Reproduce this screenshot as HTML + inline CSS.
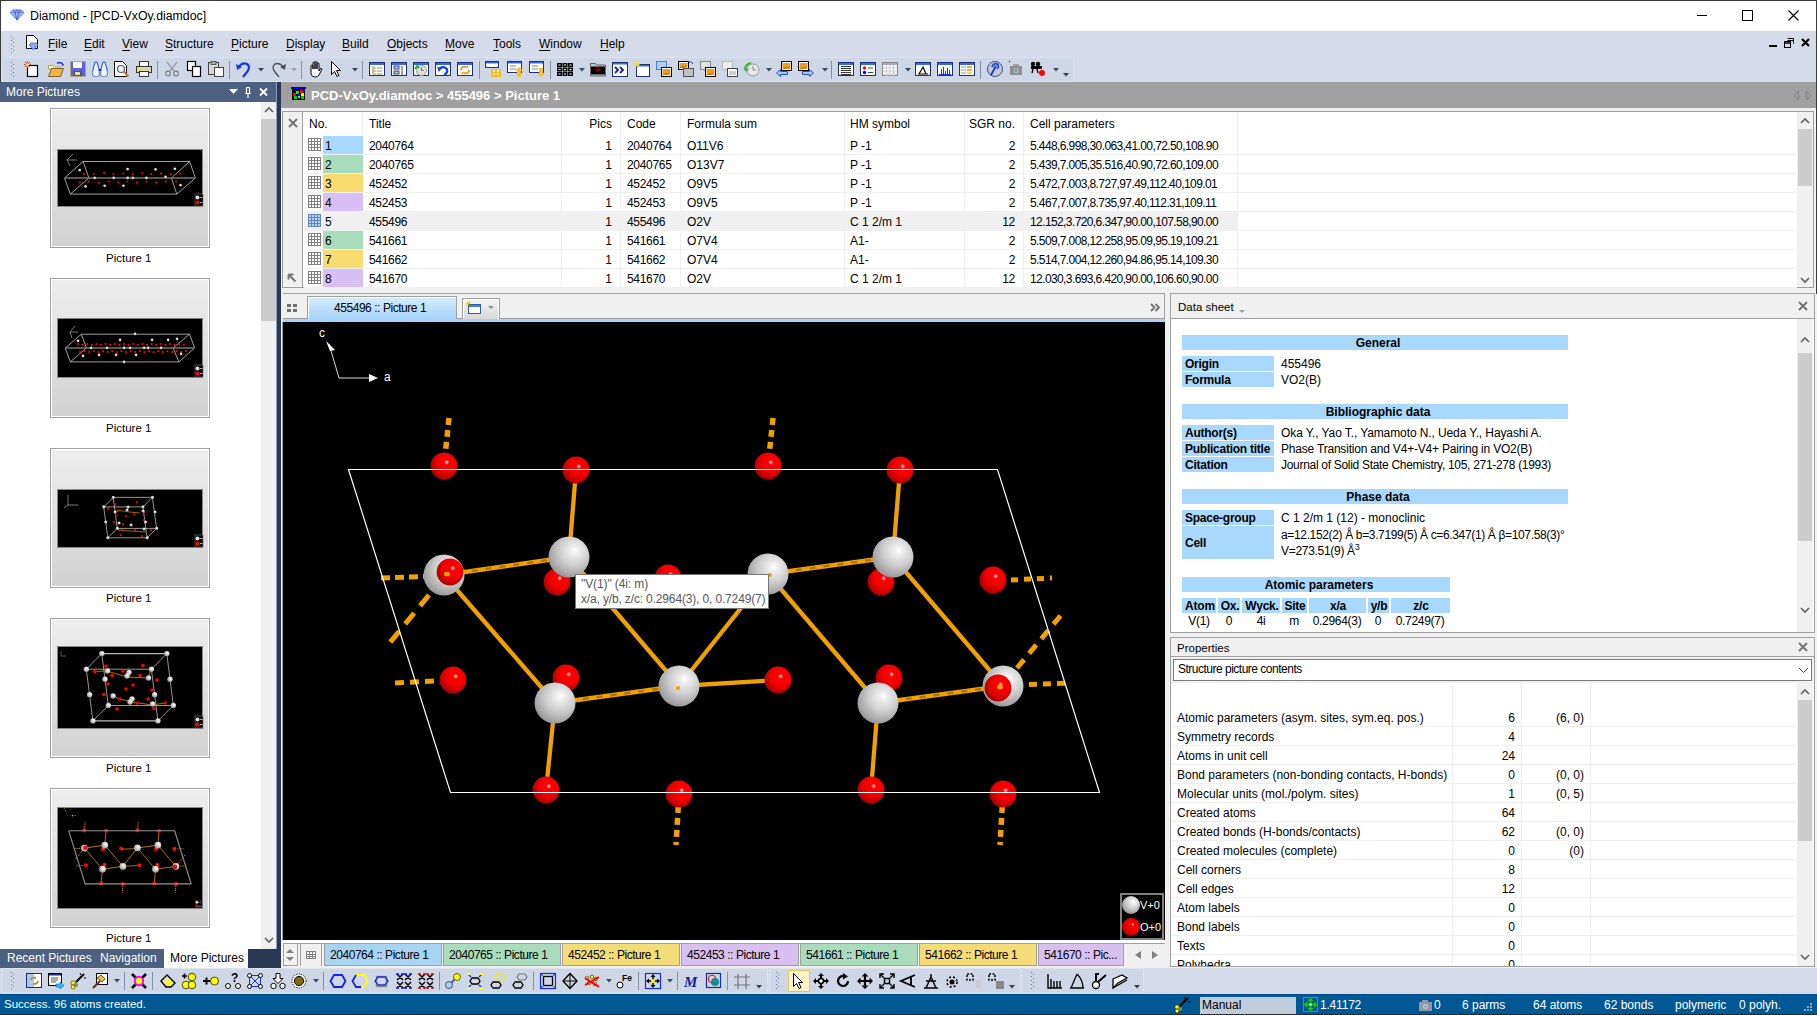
<!DOCTYPE html><html><head><meta charset="utf-8"><style>
*{margin:0;padding:0;box-sizing:border-box}
html,body{width:1817px;height:1015px;overflow:hidden;background:#fff}
body{position:relative;font:12px "Liberation Sans",sans-serif;color:#000}
.a{position:absolute}
.t{position:absolute;white-space:pre;line-height:14px;font-size:12px}
svg{position:absolute;overflow:visible}
</style></head><body><div class="a" style="left:0px;top:0px;width:1817px;height:1015px;background:#fff"></div>
<div class="a" style="left:0px;top:31px;width:1817px;height:51px;background:#d6dbe9"></div>
<svg style="left:9px;top:9px" width="16" height="12" viewBox="0 0 16 14" preserveAspectRatio="none">
<polygon points="1,4 4,1 12,1 15,4 8,13" fill="#9db4f5" stroke="#5a78e0" stroke-width="0.8"/>
<polyline points="1,4 15,4 M4,1" fill="none" stroke="#5a78e0" stroke-width="0.8"/>
<polyline points="4,1 6,4 8,13 10,4 12,1" fill="none" stroke="#3050d0" stroke-width="0.8"/>
<polyline points="6,4 8,1 10,4" fill="none" stroke="#3050d0" stroke-width="0.8"/>
</svg>
<div class="t" style="left:30px;top:9px;font-size:12.3px;color:#000">Diamond - [PCD-VxOy.diamdoc]</div>
<div class="a" style="left:1697px;top:15px;width:10px;height:1px;background:#000"></div>
<div class="a" style="left:1742px;top:10px;width:11px;height:11px;border:1px solid #000"></div>
<svg style="left:1788px;top:10px" width="11" height="11"><path d="M0.5 0.5L10.5 10.5M10.5 0.5L0.5 10.5" stroke="#000" stroke-width="1.1"/></svg>
<div class="a" style="left:0px;top:0px;width:1817px;height:1px;background:#3a3a3a"></div>
<div class="a" style="left:0px;top:0px;width:1px;height:1015px;background:#3a3a3a"></div>
<div class="a" style="left:1816px;top:0px;width:1px;height:1015px;background:#3a3a3a"></div>
<div class="a" style="left:0px;top:1014px;width:1817px;height:1px;background:#3a3a3a"></div>
<div class="a" style="left:11px;top:36px;width:1px;height:1px;background:#6f7b92"></div><div class="a" style="left:13px;top:38px;width:1px;height:1px;background:#6f7b92"></div><div class="a" style="left:11px;top:40px;width:1px;height:1px;background:#6f7b92"></div><div class="a" style="left:13px;top:42px;width:1px;height:1px;background:#6f7b92"></div><div class="a" style="left:11px;top:44px;width:1px;height:1px;background:#6f7b92"></div><div class="a" style="left:13px;top:46px;width:1px;height:1px;background:#6f7b92"></div><div class="a" style="left:11px;top:48px;width:1px;height:1px;background:#6f7b92"></div><div class="a" style="left:13px;top:50px;width:1px;height:1px;background:#6f7b92"></div><div class="a" style="left:11px;top:52px;width:1px;height:1px;background:#6f7b92"></div>
<svg style="left:25px;top:35px" width="14" height="16" viewBox="0 0 14 16">
<path d="M1.5 0.5H8.5L12.5 4.5V13.5H1.5Z" fill="#fff" stroke="#000"/>
<path d="M4 10l2-2h5l2 2-4.5 5z" fill="#8fa8f0" stroke="#4060d0" stroke-width="0.8"/>
</svg>
<div class="t" style="left:48px;top:37px;color:#000"><u style="text-decoration-thickness:1px;text-underline-offset:1.5px">F</u>ile</div>
<div class="t" style="left:84px;top:37px;color:#000"><u style="text-decoration-thickness:1px;text-underline-offset:1.5px">E</u>dit</div>
<div class="t" style="left:122px;top:37px;color:#000"><u style="text-decoration-thickness:1px;text-underline-offset:1.5px">V</u>iew</div>
<div class="t" style="left:165px;top:37px;color:#000"><u style="text-decoration-thickness:1px;text-underline-offset:1.5px">S</u>tructure</div>
<div class="t" style="left:231px;top:37px;color:#000"><u style="text-decoration-thickness:1px;text-underline-offset:1.5px">P</u>icture</div>
<div class="t" style="left:286px;top:37px;color:#000"><u style="text-decoration-thickness:1px;text-underline-offset:1.5px">D</u>isplay</div>
<div class="t" style="left:342px;top:37px;color:#000"><u style="text-decoration-thickness:1px;text-underline-offset:1.5px">B</u>uild</div>
<div class="t" style="left:387px;top:37px;color:#000"><u style="text-decoration-thickness:1px;text-underline-offset:1.5px">O</u>bjects</div>
<div class="t" style="left:445px;top:37px;color:#000"><u style="text-decoration-thickness:1px;text-underline-offset:1.5px">M</u>ove</div>
<div class="t" style="left:493px;top:37px;color:#000"><u style="text-decoration-thickness:1px;text-underline-offset:1.5px">T</u>ools</div>
<div class="t" style="left:539px;top:37px;color:#000"><u style="text-decoration-thickness:1px;text-underline-offset:1.5px">W</u>indow</div>
<div class="t" style="left:600px;top:37px;color:#000"><u style="text-decoration-thickness:1px;text-underline-offset:1.5px">H</u>elp</div>
<div class="a" style="left:1769px;top:45px;width:8px;height:2px;background:#000"></div>
<svg style="left:1784px;top:38px" width="10" height="10" viewBox="0 0 10 10"><path d="M3.5 0.5h6v5M3.5 2.5h6" fill="none" stroke="#000"/><rect x="0.5" y="3.5" width="6" height="6" fill="none" stroke="#000"/><path d="M0.5 5h6" stroke="#000" stroke-width="1.5"/></svg>
<svg style="left:1801px;top:38px" width="9" height="9"><path d="M1 1L8 8M8 1L1 8" stroke="#000" stroke-width="2.2"/></svg>
<div class="a" style="left:2px;top:57px;width:1072px;height:25px;background:#cfd6e5;border:1px solid #dde2ec;border-left-color:#d6dbe9"></div>
<div class="a" style="left:11px;top:62px;width:1px;height:1px;background:#6f7b92"></div><div class="a" style="left:13px;top:64px;width:1px;height:1px;background:#6f7b92"></div><div class="a" style="left:11px;top:66px;width:1px;height:1px;background:#6f7b92"></div><div class="a" style="left:13px;top:68px;width:1px;height:1px;background:#6f7b92"></div><div class="a" style="left:11px;top:70px;width:1px;height:1px;background:#6f7b92"></div><div class="a" style="left:13px;top:72px;width:1px;height:1px;background:#6f7b92"></div><div class="a" style="left:11px;top:74px;width:1px;height:1px;background:#6f7b92"></div><div class="a" style="left:13px;top:76px;width:1px;height:1px;background:#6f7b92"></div>
<div class="a" style="left:0px;top:82px;width:277px;height:20px;background:#4d6082"></div>
<div class="t" style="left:6px;top:85px;color:#fff;font-size:12px">More Pictures</div>
<svg style="left:228px;top:87px" width="40" height="11">
<path d="M1 2h9l-4.5 5z" fill="#fff"/>
<path d="M18.5 0.5v6M21.5 0.5v6M17 6.5h6M20 7v4M18 0.5h4" stroke="#fff" stroke-width="1.2" fill="none"/>
<path d="M32 1.5l7 7M39 1.5l-7 7" stroke="#fff" stroke-width="1.8"/>
</svg>
<div class="a" style="left:0px;top:102px;width:277px;height:847px;background:#fff"></div>
<div class="a" style="left:276px;top:82px;width:1px;height:886px;background:#8e9bbc"></div>
<div class="a" style="left:277px;top:82px;width:4px;height:886px;background:#293955"></div>
<div class="a" style="left:261px;top:102px;width:15px;height:847px;background:#f0f0f0"></div>
<div class="a" style="left:261px;top:119px;width:15px;height:202px;background:#cdcdcd"></div>
<svg style="left:264px;top:106px" width="10" height="8"><path d="M1 6l4-4 4 4" fill="none" stroke="#606060" stroke-width="1.6"/></svg>
<svg style="left:264px;top:936px" width="10" height="8"><path d="M1 2l4 4 4-4" fill="none" stroke="#606060" stroke-width="1.6"/></svg>
<div class="a" style="left:50px;top:108px;width:160px;height:140px;border:1px solid #a0a0a0;background:linear-gradient(#eeeeee,#d2d2d2);box-shadow:inset 1px 1px 0 #fff,inset -1px -1px 0 #fff"></div>
<div class="a" style="left:57px;top:149px;width:146px;height:58px;background:#000;border:1px solid #888"></div>
<svg style="left:58px;top:150px" width="144" height="56" viewBox="58 150 144 56"><path d="M64.5 178.0 L83.1 161.5 L189.6 161.5 L195.4 178.0 L176.8 194.1 L70.3 194.1 L64.5 178.0" fill="none" stroke="#c8c8c8" stroke-width="0.8"/><path d="M83.1 161.5 L88.9 178.0 L70.3 194.1" fill="none" stroke="#c8c8c8" stroke-width="0.8"/><path d="M189.6 161.5 L171.4 178.0 L176.8 194.1" fill="none" stroke="#c8c8c8" stroke-width="0.8"/><path d="M64.5 178.0 L195.4 178.0" fill="none" stroke="#777" stroke-width="1.3"/><circle cx="83.9" cy="174.0" r="1.1" fill="#f00"/><circle cx="93.6" cy="173.8" r="1.1" fill="#f00"/><circle cx="104.0" cy="173.0" r="1.1" fill="#f00"/><circle cx="113.5" cy="174.0" r="1.1" fill="#f00"/><circle cx="123.0" cy="173.5" r="1.1" fill="#f00"/><circle cx="132.6" cy="174.0" r="1.1" fill="#f00"/><circle cx="142.2" cy="173.3" r="1.1" fill="#f00"/><circle cx="151.3" cy="174.0" r="1.1" fill="#f00"/><circle cx="161.0" cy="173.5" r="1.1" fill="#f00"/><circle cx="171.0" cy="174.0" r="1.1" fill="#f00"/><circle cx="180.0" cy="173.5" r="1.1" fill="#f00"/><circle cx="79.7" cy="182.5" r="1.1" fill="#f00"/><circle cx="88.8" cy="181.5" r="1.1" fill="#f00"/><circle cx="99.0" cy="182.5" r="1.1" fill="#f00"/><circle cx="108.5" cy="181.5" r="1.1" fill="#f00"/><circle cx="118.0" cy="182.5" r="1.1" fill="#f00"/><circle cx="127.5" cy="181.5" r="1.1" fill="#f00"/><circle cx="137.0" cy="182.5" r="1.1" fill="#f00"/><circle cx="146.5" cy="181.5" r="1.1" fill="#f00"/><circle cx="156.0" cy="182.5" r="1.1" fill="#f00"/><circle cx="166.0" cy="181.5" r="1.1" fill="#f00"/><circle cx="176.0" cy="181.5" r="1.1" fill="#f00"/><circle cx="79.6" cy="170.2" r="1.4" fill="url(#gV)"/><circle cx="85.5" cy="186.5" r="1.4" fill="url(#gV)"/><circle cx="94.6" cy="178.0" r="1.4" fill="url(#gV)"/><circle cx="104.6" cy="185.8" r="1.4" fill="url(#gV)"/><circle cx="113.6" cy="178.0" r="1.4" fill="url(#gV)"/><circle cx="123.4" cy="185.8" r="1.4" fill="url(#gV)"/><circle cx="127.5" cy="169.2" r="1.4" fill="url(#gV)"/><circle cx="127.6" cy="178.0" r="1.4" fill="url(#gV)"/><circle cx="132.7" cy="178.0" r="1.4" fill="url(#gV)"/><circle cx="146.3" cy="178.0" r="1.4" fill="url(#gV)"/><circle cx="155.5" cy="169.5" r="1.4" fill="url(#gV)"/><circle cx="165.5" cy="177.0" r="1.4" fill="url(#gV)"/><circle cx="174.8" cy="168.9" r="1.4" fill="url(#gV)"/><circle cx="180.5" cy="185.2" r="1.4" fill="url(#gV)"/><path d="M67.0 160.0 L73.0 154.0" fill="none" stroke="#ccc" stroke-width="0.6"/><path d="M67.0 160.0 L77.0 160.0" fill="none" stroke="#ccc" stroke-width="0.6"/><path d="M67.0 160.0 L70.0 166.0" fill="none" stroke="#ccc" stroke-width="0.6"/></svg>
<svg style="left:195px;top:194px" width="8" height="12"><rect x="0" y="0" width="8" height="12" fill="#000" stroke="#777" stroke-width="0.6"/><circle cx="2.5" cy="3.5" r="2" fill="#ddd"/><circle cx="2.5" cy="8.5" r="2" fill="#f00"/><path d="M5 3.5h2.5M5 8.5h2.5" stroke="#ddd" stroke-width="0.8"/></svg>
<div class="t" style="left:106px;top:251px;font-size:11.5px">Picture 1</div>
<div class="a" style="left:50px;top:278px;width:160px;height:140px;border:1px solid #a0a0a0;background:linear-gradient(#eeeeee,#d2d2d2);box-shadow:inset 1px 1px 0 #fff,inset -1px -1px 0 #fff"></div>
<div class="a" style="left:57px;top:318px;width:146px;height:60px;background:#000;border:1px solid #888"></div>
<svg style="left:58px;top:319px" width="144" height="58" viewBox="58 319 144 58"><path d="M65.3 348.0 L81.3 334.2 L189.6 334.2 L194.6 348.0 L178.9 361.9 L70.3 361.9 L65.3 348.0" fill="none" stroke="#c8c8c8" stroke-width="0.8"/><path d="M81.3 334.2 L86.4 348.0 L70.3 361.9" fill="none" stroke="#c8c8c8" stroke-width="0.8"/><path d="M189.6 334.2 L173.1 348.0 L178.9 361.9" fill="none" stroke="#c8c8c8" stroke-width="0.8"/><path d="M65.3 348.0 L194.6 348.0" fill="none" stroke="#777" stroke-width="1.3"/><circle cx="78.0" cy="344.0" r="1.1" fill="#f00"/><circle cx="80.0" cy="352.0" r="1.1" fill="#f00"/><circle cx="82.6" cy="344.8" r="1.1" fill="#f00"/><circle cx="84.6" cy="351.2" r="1.1" fill="#f00"/><circle cx="87.2" cy="344.0" r="1.1" fill="#f00"/><circle cx="89.2" cy="352.0" r="1.1" fill="#f00"/><circle cx="91.8" cy="344.8" r="1.1" fill="#f00"/><circle cx="93.8" cy="351.2" r="1.1" fill="#f00"/><circle cx="96.4" cy="344.0" r="1.1" fill="#f00"/><circle cx="98.4" cy="352.0" r="1.1" fill="#f00"/><circle cx="101.0" cy="344.8" r="1.1" fill="#f00"/><circle cx="103.0" cy="351.2" r="1.1" fill="#f00"/><circle cx="105.6" cy="344.0" r="1.1" fill="#f00"/><circle cx="107.6" cy="352.0" r="1.1" fill="#f00"/><circle cx="110.2" cy="344.8" r="1.1" fill="#f00"/><circle cx="112.2" cy="351.2" r="1.1" fill="#f00"/><circle cx="114.8" cy="344.0" r="1.1" fill="#f00"/><circle cx="116.8" cy="352.0" r="1.1" fill="#f00"/><circle cx="119.4" cy="344.8" r="1.1" fill="#f00"/><circle cx="121.4" cy="351.2" r="1.1" fill="#f00"/><circle cx="124.0" cy="344.0" r="1.1" fill="#f00"/><circle cx="126.0" cy="352.0" r="1.1" fill="#f00"/><circle cx="128.6" cy="344.8" r="1.1" fill="#f00"/><circle cx="130.6" cy="351.2" r="1.1" fill="#f00"/><circle cx="133.2" cy="344.0" r="1.1" fill="#f00"/><circle cx="135.2" cy="352.0" r="1.1" fill="#f00"/><circle cx="137.8" cy="344.8" r="1.1" fill="#f00"/><circle cx="139.8" cy="351.2" r="1.1" fill="#f00"/><circle cx="142.4" cy="344.0" r="1.1" fill="#f00"/><circle cx="144.4" cy="352.0" r="1.1" fill="#f00"/><circle cx="147.0" cy="344.8" r="1.1" fill="#f00"/><circle cx="149.0" cy="351.2" r="1.1" fill="#f00"/><circle cx="151.6" cy="344.0" r="1.1" fill="#f00"/><circle cx="153.6" cy="352.0" r="1.1" fill="#f00"/><circle cx="156.2" cy="344.8" r="1.1" fill="#f00"/><circle cx="158.2" cy="351.2" r="1.1" fill="#f00"/><circle cx="160.8" cy="344.0" r="1.1" fill="#f00"/><circle cx="162.8" cy="352.0" r="1.1" fill="#f00"/><circle cx="165.4" cy="344.8" r="1.1" fill="#f00"/><circle cx="167.4" cy="351.2" r="1.1" fill="#f00"/><circle cx="170.0" cy="344.0" r="1.1" fill="#f00"/><circle cx="172.0" cy="352.0" r="1.1" fill="#f00"/><circle cx="174.6" cy="344.8" r="1.1" fill="#f00"/><circle cx="176.6" cy="351.2" r="1.1" fill="#f00"/><circle cx="179.2" cy="344.0" r="1.1" fill="#f00"/><circle cx="181.2" cy="352.0" r="1.1" fill="#f00"/><circle cx="183.8" cy="344.8" r="1.1" fill="#f00"/><circle cx="185.8" cy="351.2" r="1.1" fill="#f00"/><circle cx="78.0" cy="341.0" r="1.4" fill="url(#gV)"/><circle cx="83.0" cy="356.0" r="1.4" fill="url(#gV)"/><circle cx="91.0" cy="348.0" r="1.4" fill="url(#gV)"/><circle cx="99.0" cy="355.0" r="1.4" fill="url(#gV)"/><circle cx="107.0" cy="348.0" r="1.4" fill="url(#gV)"/><circle cx="116.0" cy="355.0" r="1.4" fill="url(#gV)"/><circle cx="120.0" cy="340.0" r="1.4" fill="url(#gV)"/><circle cx="124.0" cy="348.0" r="1.4" fill="url(#gV)"/><circle cx="130.0" cy="348.0" r="1.4" fill="url(#gV)"/><circle cx="136.0" cy="355.0" r="1.4" fill="url(#gV)"/><circle cx="144.0" cy="348.0" r="1.4" fill="url(#gV)"/><circle cx="148.0" cy="348.0" r="1.4" fill="url(#gV)"/><circle cx="152.0" cy="340.0" r="1.4" fill="url(#gV)"/><circle cx="161.0" cy="348.0" r="1.4" fill="url(#gV)"/><circle cx="168.0" cy="340.0" r="1.4" fill="url(#gV)"/><circle cx="177.0" cy="339.0" r="1.4" fill="url(#gV)"/><circle cx="181.0" cy="354.0" r="1.4" fill="url(#gV)"/><circle cx="135.0" cy="334.0" r="1.4" fill="url(#gV)"/><circle cx="124.0" cy="362.0" r="1.4" fill="url(#gV)"/><path d="M70.0 332.0 L75.0 326.0" fill="none" stroke="#ccc" stroke-width="0.6"/><path d="M70.0 332.0 L78.0 332.0" fill="none" stroke="#ccc" stroke-width="0.6"/><path d="M70.0 332.0 L72.0 338.0" fill="none" stroke="#ccc" stroke-width="0.6"/></svg>
<svg style="left:195px;top:365px" width="8" height="12"><rect x="0" y="0" width="8" height="12" fill="#000" stroke="#777" stroke-width="0.6"/><circle cx="2.5" cy="3.5" r="2" fill="#ddd"/><circle cx="2.5" cy="8.5" r="2" fill="#f00"/><path d="M5 3.5h2.5M5 8.5h2.5" stroke="#ddd" stroke-width="0.8"/></svg>
<div class="t" style="left:106px;top:421px;font-size:11.5px">Picture 1</div>
<div class="a" style="left:50px;top:448px;width:160px;height:140px;border:1px solid #a0a0a0;background:linear-gradient(#eeeeee,#d2d2d2);box-shadow:inset 1px 1px 0 #fff,inset -1px -1px 0 #fff"></div>
<div class="a" style="left:57px;top:489px;width:146px;height:59px;background:#000;border:1px solid #888"></div>
<svg style="left:58px;top:490px" width="144" height="57" viewBox="58 490 144 57"><path d="M113.2 497.4 L152.4 497.4" fill="none" stroke="#bbb" stroke-width="0.8"/><path d="M103.7 506.9 L142.9 506.9" fill="none" stroke="#bbb" stroke-width="0.8"/><path d="M113.2 497.4 L103.7 506.9" fill="none" stroke="#bbb" stroke-width="0.8"/><path d="M152.4 497.4 L142.9 506.9" fill="none" stroke="#bbb" stroke-width="0.8"/><path d="M103.7 506.9 L107.8 537.8" fill="none" stroke="#bbb" stroke-width="0.8"/><path d="M113.2 497.4 L117.3 528.4" fill="none" stroke="#bbb" stroke-width="0.8"/><path d="M152.4 497.4 L156.6 528.4" fill="none" stroke="#bbb" stroke-width="0.8"/><path d="M142.9 506.9 L147.1 537.8" fill="none" stroke="#bbb" stroke-width="0.8"/><path d="M117.3 528.4 L156.6 528.4" fill="none" stroke="#bbb" stroke-width="0.8"/><path d="M107.8 537.8 L147.1 537.8" fill="none" stroke="#bbb" stroke-width="0.8"/><path d="M117.3 528.4 L107.8 537.8" fill="none" stroke="#bbb" stroke-width="0.8"/><path d="M156.6 528.4 L147.1 537.8" fill="none" stroke="#bbb" stroke-width="0.8"/><path d="M116.0 510.0 L130.0 512.0 L140.0 513.0" fill="none" stroke="#c08000" stroke-width="0.8"/><path d="M118.0 530.0 L130.0 531.0 L146.0 532.0" fill="none" stroke="#c08000" stroke-width="0.8"/><circle cx="115.0" cy="504.0" r="1.1" fill="#f00"/><circle cx="137.0" cy="502.0" r="1.1" fill="#f00"/><circle cx="118.0" cy="511.0" r="1.1" fill="#f00"/><circle cx="144.0" cy="512.0" r="1.1" fill="#f00"/><circle cx="116.0" cy="515.0" r="1.1" fill="#f00"/><circle cx="126.0" cy="516.0" r="1.1" fill="#f00"/><circle cx="134.0" cy="514.0" r="1.1" fill="#f00"/><circle cx="114.0" cy="522.0" r="1.1" fill="#f00"/><circle cx="123.0" cy="524.0" r="1.1" fill="#f00"/><circle cx="144.0" cy="520.0" r="1.1" fill="#f00"/><circle cx="122.0" cy="530.0" r="1.1" fill="#f00"/><circle cx="135.0" cy="530.0" r="1.1" fill="#f00"/><circle cx="151.0" cy="530.0" r="1.1" fill="#f00"/><circle cx="121.0" cy="535.0" r="1.1" fill="#f00"/><circle cx="142.0" cy="536.0" r="1.1" fill="#f00"/><circle cx="108.0" cy="509.0" r="1.1" fill="#f00"/><circle cx="113.2" cy="497.4" r="1.6" fill="url(#gV)"/><circle cx="152.4" cy="497.4" r="1.6" fill="url(#gV)"/><circle cx="103.7" cy="506.9" r="1.6" fill="url(#gV)"/><circle cx="142.9" cy="506.9" r="1.6" fill="url(#gV)"/><circle cx="117.3" cy="528.4" r="1.6" fill="url(#gV)"/><circle cx="156.6" cy="528.4" r="1.6" fill="url(#gV)"/><circle cx="107.8" cy="537.8" r="1.6" fill="url(#gV)"/><circle cx="147.1" cy="537.8" r="1.6" fill="url(#gV)"/><circle cx="105.7" cy="522.0" r="1.6" fill="url(#gV)"/><circle cx="115.0" cy="512.0" r="1.6" fill="url(#gV)"/><circle cx="155.0" cy="512.0" r="1.6" fill="url(#gV)"/><circle cx="145.5" cy="522.0" r="1.6" fill="url(#gV)"/><circle cx="127.0" cy="510.0" r="1.6" fill="url(#gV)"/><circle cx="128.0" cy="507.0" r="1.6" fill="url(#gV)"/><circle cx="143.0" cy="511.0" r="1.6" fill="url(#gV)"/><circle cx="119.0" cy="523.0" r="1.6" fill="url(#gV)"/><circle cx="131.0" cy="525.0" r="1.6" fill="url(#gV)"/><circle cx="144.0" cy="529.0" r="1.6" fill="url(#gV)"/><path d="M68.0 505.0 L68.0 495.0" fill="none" stroke="#ccc" stroke-width="0.6"/><path d="M68.0 505.0 L78.0 505.0" fill="none" stroke="#ccc" stroke-width="0.6"/><path d="M68.0 505.0 L64.0 508.0" fill="none" stroke="#ccc" stroke-width="0.6"/></svg>
<svg style="left:195px;top:535px" width="8" height="12"><rect x="0" y="0" width="8" height="12" fill="#000" stroke="#777" stroke-width="0.6"/><circle cx="2.5" cy="3.5" r="2" fill="#ddd"/><circle cx="2.5" cy="8.5" r="2" fill="#f00"/><path d="M5 3.5h2.5M5 8.5h2.5" stroke="#ddd" stroke-width="0.8"/></svg>
<div class="t" style="left:106px;top:591px;font-size:11.5px">Picture 1</div>
<div class="a" style="left:50px;top:618px;width:160px;height:140px;border:1px solid #a0a0a0;background:linear-gradient(#eeeeee,#d2d2d2);box-shadow:inset 1px 1px 0 #fff,inset -1px -1px 0 #fff"></div>
<div class="a" style="left:57px;top:646px;width:146px;height:83px;background:#000;border:1px solid #888"></div>
<svg style="left:58px;top:647px" width="144" height="81" viewBox="58 647 144 81"><path d="M101.8 653.6 L166.8 653.6" fill="none" stroke="#bbb" stroke-width="1.4"/><path d="M86.3 669.2 L151.4 669.2" fill="none" stroke="#bbb" stroke-width="0.8"/><path d="M101.8 653.6 L86.3 669.2" fill="none" stroke="#bbb" stroke-width="0.8"/><path d="M166.8 653.6 L151.4 669.2" fill="none" stroke="#bbb" stroke-width="0.8"/><path d="M86.3 669.2 L92.9 720.9" fill="none" stroke="#bbb" stroke-width="0.8"/><path d="M101.8 653.6 L108.3 705.5" fill="none" stroke="#bbb" stroke-width="0.8"/><path d="M166.8 653.6 L173.3 705.5" fill="none" stroke="#bbb" stroke-width="0.8"/><path d="M151.4 669.2 L157.9 720.9" fill="none" stroke="#bbb" stroke-width="0.8"/><path d="M108.3 705.5 L173.3 705.5" fill="none" stroke="#bbb" stroke-width="0.8"/><path d="M92.9 720.9 L157.9 720.9" fill="none" stroke="#bbb" stroke-width="1.4"/><path d="M108.3 705.5 L92.9 720.9" fill="none" stroke="#bbb" stroke-width="0.8"/><path d="M173.3 705.5 L157.9 720.9" fill="none" stroke="#bbb" stroke-width="0.8"/><path d="M94.5 671.5 L107.0 671.0 L127.0 677.0 L148.0 678.0 L151.0 670.0" fill="none" stroke="#c08000" stroke-width="0.9"/><path d="M111.0 695.0 L120.0 699.0 L132.0 702.0 L152.0 705.0 L165.0 703.0" fill="none" stroke="#c08000" stroke-width="0.9"/><circle cx="106.0" cy="666.0" r="1.8" fill="#f00"/><circle cx="143.0" cy="665.5" r="1.8" fill="#f00"/><circle cx="95.0" cy="671.5" r="1.8" fill="#f00"/><circle cx="123.0" cy="671.0" r="1.8" fill="#f00"/><circle cx="112.0" cy="675.5" r="1.8" fill="#f00"/><circle cx="140.0" cy="675.5" r="1.8" fill="#f00"/><circle cx="108.0" cy="684.0" r="1.8" fill="#f00"/><circle cx="133.0" cy="685.0" r="1.8" fill="#f00"/><circle cx="126.0" cy="689.0" r="1.8" fill="#f00"/><circle cx="152.0" cy="690.0" r="1.8" fill="#f00"/><circle cx="104.0" cy="694.5" r="1.8" fill="#f00"/><circle cx="120.0" cy="699.0" r="1.8" fill="#f00"/><circle cx="148.0" cy="699.0" r="1.8" fill="#f00"/><circle cx="137.0" cy="703.0" r="1.8" fill="#f00"/><circle cx="165.0" cy="703.0" r="1.8" fill="#f00"/><circle cx="117.0" cy="709.0" r="1.8" fill="#f00"/><circle cx="154.0" cy="708.5" r="1.8" fill="#f00"/><circle cx="157.0" cy="680.0" r="1.8" fill="#f00"/><circle cx="101.8" cy="653.6" r="2.7" fill="url(#gV)"/><circle cx="166.8" cy="653.6" r="2.7" fill="url(#gV)"/><circle cx="86.3" cy="669.2" r="2.7" fill="url(#gV)"/><circle cx="151.4" cy="669.2" r="2.7" fill="url(#gV)"/><circle cx="108.3" cy="705.5" r="2.7" fill="url(#gV)"/><circle cx="173.3" cy="705.5" r="2.7" fill="url(#gV)"/><circle cx="92.9" cy="720.9" r="2.7" fill="url(#gV)"/><circle cx="157.9" cy="720.9" r="2.7" fill="url(#gV)"/><circle cx="89.6" cy="694.7" r="2.7" fill="url(#gV)"/><circle cx="105.0" cy="679.3" r="2.7" fill="url(#gV)"/><circle cx="170.0" cy="679.3" r="2.7" fill="url(#gV)"/><circle cx="154.6" cy="694.7" r="2.7" fill="url(#gV)"/><circle cx="107.5" cy="671.0" r="2.7" fill="url(#gV)"/><circle cx="129.0" cy="672.5" r="2.7" fill="url(#gV)"/><circle cx="127.0" cy="676.0" r="2.7" fill="url(#gV)"/><circle cx="148.5" cy="678.0" r="2.7" fill="url(#gV)"/><circle cx="113.0" cy="696.0" r="2.7" fill="url(#gV)"/><circle cx="132.0" cy="699.0" r="2.7" fill="url(#gV)"/><circle cx="130.0" cy="702.0" r="2.7" fill="url(#gV)"/><circle cx="152.5" cy="704.0" r="2.7" fill="url(#gV)"/><path d="M61.0 651.0 L61.0 656.0 L66.0 656.0" fill="none" stroke="#aaa" stroke-width="0.5"/></svg>
<svg style="left:195px;top:716px" width="8" height="12"><rect x="0" y="0" width="8" height="12" fill="#000" stroke="#777" stroke-width="0.6"/><circle cx="2.5" cy="3.5" r="2" fill="#ddd"/><circle cx="2.5" cy="8.5" r="2" fill="#f00"/><path d="M5 3.5h2.5M5 8.5h2.5" stroke="#ddd" stroke-width="0.8"/></svg>
<div class="t" style="left:106px;top:761px;font-size:11.5px">Picture 1</div>
<div class="a" style="left:50px;top:788px;width:160px;height:140px;border:1px solid #a0a0a0;background:linear-gradient(#eeeeee,#d2d2d2);box-shadow:inset 1px 1px 0 #fff,inset -1px -1px 0 #fff"></div>
<div class="a" style="left:57px;top:807px;width:146px;height:102px;background:#000;border:1px solid #888"></div>
<svg style="left:58px;top:808px" width="144" height="100" viewBox="58 808 144 100"><use href="#mainAll" transform="translate(11.62,753.6) scale(0.1638,0.1644)"/><path d="M68.7 830.8 L174.6 830.8 L191.0 883.9 L85.1 883.9 L68.7 830.8" fill="none" stroke="#888" stroke-width="1.1"/></svg>
<div class="t" style="left:106px;top:931px;font-size:11.5px">Picture 1</div>
<div class="a" style="left:0px;top:949px;width:277px;height:19px;background:#293955"></div>
<div class="a" style="left:0px;top:949px;width:164px;height:19px;background:#4d6082"></div>
<div class="t" style="left:7px;top:951px;color:#fff">Recent Pictures</div>
<div class="t" style="left:100px;top:951px;color:#fff">Navigation</div>
<div class="a" style="left:164px;top:949px;width:84px;height:19px;background:#fff"></div>
<div class="t" style="left:170px;top:951px;color:#000">More Pictures</div>
<div class="a" style="left:281px;top:82px;width:1535px;height:26px;background:#a0a0a0"></div>
<svg style="left:291px;top:87px" width="15" height="14" viewBox="0 0 15 14">
<rect x="0" y="0" width="15" height="2" fill="#0000e0"/>
<rect x="1" y="2" width="13" height="11" fill="#000"/>
<rect x="2" y="6" width="3" height="3" fill="#f00"/><rect x="5" y="4" width="3" height="3" fill="#0f0"/><rect x="9" y="3" width="3" height="3" fill="#f00"/>
<rect x="10" y="6" width="3" height="3" fill="#ff0"/><rect x="7" y="6" width="2" height="3" fill="#00f"/><rect x="3" y="9" width="3" height="3" fill="#0c0"/>
<rect x="7" y="9" width="2" height="2" fill="#0ff"/><rect x="10" y="9" width="3" height="3" fill="#0c0"/>
</svg>
<div class="t" style="left:311px;top:88px;color:#fff;font-weight:bold;font-size:13px;line-height:16px">PCD-VxOy.diamdoc &gt; 455496 &gt; Picture 1</div>
<svg style="left:1793px;top:90px" width="20" height="11"><path d="M5.5 1L1 5.5 5.5 10z" fill="none" stroke="#808080"/><path d="M13.5 1L18 5.5 13.5 10z" fill="none" stroke="#808080"/></svg>
<div class="a" style="left:281px;top:108px;width:1535px;height:186px;background:#f0f0f0"></div>
<div class="a" style="left:282px;top:111px;width:1532px;height:177px;background:#fff;border:1px solid #a0a0a0"></div>
<div class="a" style="left:283px;top:112px;width:20px;height:175px;background:#f0f0f0;border-right:1px solid #a0a0a0"></div>
<svg style="left:288px;top:118px" width="10" height="10"><path d="M1 1l8 8M9 1l-8 8" stroke="#707070" stroke-width="1.8"/></svg>
<svg style="left:287px;top:273px" width="10" height="10"><path d="M1.5 1.5v5M1.5 1.5h5M1.5 1.5l7 7" stroke="#707070" stroke-width="1.8" fill="none"/></svg>
<div class="a" style="left:362px;top:112px;width:1px;height:24px;background:#f0f0f0"></div>
<div class="a" style="left:561px;top:112px;width:1px;height:24px;background:#f0f0f0"></div>
<div class="a" style="left:620px;top:112px;width:1px;height:24px;background:#f0f0f0"></div>
<div class="a" style="left:680px;top:112px;width:1px;height:24px;background:#f0f0f0"></div>
<div class="a" style="left:844px;top:112px;width:1px;height:24px;background:#f0f0f0"></div>
<div class="a" style="left:964px;top:112px;width:1px;height:24px;background:#f0f0f0"></div>
<div class="a" style="left:1023px;top:112px;width:1px;height:24px;background:#f0f0f0"></div>
<div class="a" style="left:1237px;top:112px;width:1px;height:24px;background:#f0f0f0"></div>
<div class="t" style="left:309px;top:117px;">No.</div>
<div class="t" style="left:369px;top:117px;">Title</div>
<div class="t" style="right:1205px;top:117px;">Pics</div>
<div class="t" style="left:627px;top:117px;">Code</div>
<div class="t" style="left:687px;top:117px;">Formula sum</div>
<div class="t" style="left:850px;top:117px;">HM symbol</div>
<div class="t" style="right:802px;top:117px;">SGR no.</div>
<div class="t" style="left:1030px;top:117px;">Cell parameters</div>
<div class="a" style="left:323px;top:136px;width:40px;height:19px;background:#a8d8fc"></div>
<div class="a" style="left:304px;top:154px;width:1493px;height:1px;background:#f0f0f0"></div>
<div class="a" style="left:561px;top:136px;width:1px;height:19px;background:#f0f0f0"></div>
<div class="a" style="left:620px;top:136px;width:1px;height:19px;background:#f0f0f0"></div>
<div class="a" style="left:680px;top:136px;width:1px;height:19px;background:#f0f0f0"></div>
<div class="a" style="left:844px;top:136px;width:1px;height:19px;background:#f0f0f0"></div>
<div class="a" style="left:964px;top:136px;width:1px;height:19px;background:#f0f0f0"></div>
<div class="a" style="left:1023px;top:136px;width:1px;height:19px;background:#f0f0f0"></div>
<div class="a" style="left:1237px;top:136px;width:1px;height:19px;background:#f0f0f0"></div>
<svg style="left:308px;top:138px" width="13" height="13" viewBox="0 0 13 13"><rect x="0" y="0" width="13" height="13" fill="#fff"/><path d="M0.5 0v13M3.5 0v13M6.5 0v13M9.5 0v13M12.5 0v13M0 0.5h13M0 3.5h13M0 6.5h13M0 9.5h13M0 12.5h13" stroke="#555" stroke-width="1" opacity="0.75"/></svg>
<div class="t" style="left:325px;top:139px;">1</div>
<div class="t" style="left:369px;top:139px;letter-spacing:-0.3px">2040764</div>
<div class="t" style="right:1205px;top:139px;">1</div>
<div class="t" style="left:627px;top:139px;letter-spacing:-0.3px">2040764</div>
<div class="t" style="left:687px;top:139px;">O11V6</div>
<div class="t" style="left:850px;top:139px;">P -1</div>
<div class="t" style="right:802px;top:139px;letter-spacing:-0.3px">2</div>
<div class="t" style="left:1030px;top:139px;letter-spacing:-0.6px">5.448,6.998,30.063,41.00,72.50,108.90</div>
<div class="a" style="left:323px;top:155px;width:40px;height:19px;background:#a8dcbc"></div>
<div class="a" style="left:304px;top:173px;width:1493px;height:1px;background:#f0f0f0"></div>
<div class="a" style="left:561px;top:155px;width:1px;height:19px;background:#f0f0f0"></div>
<div class="a" style="left:620px;top:155px;width:1px;height:19px;background:#f0f0f0"></div>
<div class="a" style="left:680px;top:155px;width:1px;height:19px;background:#f0f0f0"></div>
<div class="a" style="left:844px;top:155px;width:1px;height:19px;background:#f0f0f0"></div>
<div class="a" style="left:964px;top:155px;width:1px;height:19px;background:#f0f0f0"></div>
<div class="a" style="left:1023px;top:155px;width:1px;height:19px;background:#f0f0f0"></div>
<div class="a" style="left:1237px;top:155px;width:1px;height:19px;background:#f0f0f0"></div>
<svg style="left:308px;top:157px" width="13" height="13" viewBox="0 0 13 13"><rect x="0" y="0" width="13" height="13" fill="#fff"/><path d="M0.5 0v13M3.5 0v13M6.5 0v13M9.5 0v13M12.5 0v13M0 0.5h13M0 3.5h13M0 6.5h13M0 9.5h13M0 12.5h13" stroke="#555" stroke-width="1" opacity="0.75"/></svg>
<div class="t" style="left:325px;top:158px;">2</div>
<div class="t" style="left:369px;top:158px;letter-spacing:-0.3px">2040765</div>
<div class="t" style="right:1205px;top:158px;">1</div>
<div class="t" style="left:627px;top:158px;letter-spacing:-0.3px">2040765</div>
<div class="t" style="left:687px;top:158px;">O13V7</div>
<div class="t" style="left:850px;top:158px;">P -1</div>
<div class="t" style="right:802px;top:158px;letter-spacing:-0.3px">2</div>
<div class="t" style="left:1030px;top:158px;letter-spacing:-0.6px">5.439,7.005,35.516,40.90,72.60,109.00</div>
<div class="a" style="left:323px;top:174px;width:40px;height:19px;background:#f8dc70"></div>
<div class="a" style="left:304px;top:192px;width:1493px;height:1px;background:#f0f0f0"></div>
<div class="a" style="left:561px;top:174px;width:1px;height:19px;background:#f0f0f0"></div>
<div class="a" style="left:620px;top:174px;width:1px;height:19px;background:#f0f0f0"></div>
<div class="a" style="left:680px;top:174px;width:1px;height:19px;background:#f0f0f0"></div>
<div class="a" style="left:844px;top:174px;width:1px;height:19px;background:#f0f0f0"></div>
<div class="a" style="left:964px;top:174px;width:1px;height:19px;background:#f0f0f0"></div>
<div class="a" style="left:1023px;top:174px;width:1px;height:19px;background:#f0f0f0"></div>
<div class="a" style="left:1237px;top:174px;width:1px;height:19px;background:#f0f0f0"></div>
<svg style="left:308px;top:176px" width="13" height="13" viewBox="0 0 13 13"><rect x="0" y="0" width="13" height="13" fill="#fff"/><path d="M0.5 0v13M3.5 0v13M6.5 0v13M9.5 0v13M12.5 0v13M0 0.5h13M0 3.5h13M0 6.5h13M0 9.5h13M0 12.5h13" stroke="#555" stroke-width="1" opacity="0.75"/></svg>
<div class="t" style="left:325px;top:177px;">3</div>
<div class="t" style="left:369px;top:177px;letter-spacing:-0.3px">452452</div>
<div class="t" style="right:1205px;top:177px;">1</div>
<div class="t" style="left:627px;top:177px;letter-spacing:-0.3px">452452</div>
<div class="t" style="left:687px;top:177px;">O9V5</div>
<div class="t" style="left:850px;top:177px;">P -1</div>
<div class="t" style="right:802px;top:177px;letter-spacing:-0.3px">2</div>
<div class="t" style="left:1030px;top:177px;letter-spacing:-0.6px">5.472,7.003,8.727,97.49,112.40,109.01</div>
<div class="a" style="left:323px;top:193px;width:40px;height:19px;background:#d8c0f4"></div>
<div class="a" style="left:304px;top:211px;width:1493px;height:1px;background:#f0f0f0"></div>
<div class="a" style="left:561px;top:193px;width:1px;height:19px;background:#f0f0f0"></div>
<div class="a" style="left:620px;top:193px;width:1px;height:19px;background:#f0f0f0"></div>
<div class="a" style="left:680px;top:193px;width:1px;height:19px;background:#f0f0f0"></div>
<div class="a" style="left:844px;top:193px;width:1px;height:19px;background:#f0f0f0"></div>
<div class="a" style="left:964px;top:193px;width:1px;height:19px;background:#f0f0f0"></div>
<div class="a" style="left:1023px;top:193px;width:1px;height:19px;background:#f0f0f0"></div>
<div class="a" style="left:1237px;top:193px;width:1px;height:19px;background:#f0f0f0"></div>
<svg style="left:308px;top:195px" width="13" height="13" viewBox="0 0 13 13"><rect x="0" y="0" width="13" height="13" fill="#fff"/><path d="M0.5 0v13M3.5 0v13M6.5 0v13M9.5 0v13M12.5 0v13M0 0.5h13M0 3.5h13M0 6.5h13M0 9.5h13M0 12.5h13" stroke="#555" stroke-width="1" opacity="0.75"/></svg>
<div class="t" style="left:325px;top:196px;">4</div>
<div class="t" style="left:369px;top:196px;letter-spacing:-0.3px">452453</div>
<div class="t" style="right:1205px;top:196px;">1</div>
<div class="t" style="left:627px;top:196px;letter-spacing:-0.3px">452453</div>
<div class="t" style="left:687px;top:196px;">O9V5</div>
<div class="t" style="left:850px;top:196px;">P -1</div>
<div class="t" style="right:802px;top:196px;letter-spacing:-0.3px">2</div>
<div class="t" style="left:1030px;top:196px;letter-spacing:-0.6px">5.467,7.007,8.735,97.40,112.31,109.11</div>
<div class="a" style="left:304px;top:212px;width:933px;height:19px;background:#f0f0f0"></div>
<div class="a" style="left:304px;top:230px;width:1493px;height:1px;background:#f0f0f0"></div>
<div class="a" style="left:561px;top:212px;width:1px;height:19px;background:#f0f0f0"></div>
<div class="a" style="left:620px;top:212px;width:1px;height:19px;background:#f0f0f0"></div>
<div class="a" style="left:680px;top:212px;width:1px;height:19px;background:#f0f0f0"></div>
<div class="a" style="left:844px;top:212px;width:1px;height:19px;background:#f0f0f0"></div>
<div class="a" style="left:964px;top:212px;width:1px;height:19px;background:#f0f0f0"></div>
<div class="a" style="left:1023px;top:212px;width:1px;height:19px;background:#f0f0f0"></div>
<div class="a" style="left:1237px;top:212px;width:1px;height:19px;background:#f0f0f0"></div>
<svg style="left:308px;top:214px" width="13" height="13" viewBox="0 0 13 13"><rect x="0" y="0" width="13" height="13" fill="#b8d0f0"/><path d="M0.5 0v13M3.5 0v13M6.5 0v13M9.5 0v13M12.5 0v13M0 0.5h13M0 3.5h13M0 6.5h13M0 9.5h13M0 12.5h13" stroke="#4a6fa8" stroke-width="1" opacity="0.75"/></svg>
<div class="t" style="left:325px;top:215px;">5</div>
<div class="t" style="left:369px;top:215px;letter-spacing:-0.3px">455496</div>
<div class="t" style="right:1205px;top:215px;">1</div>
<div class="t" style="left:627px;top:215px;letter-spacing:-0.3px">455496</div>
<div class="t" style="left:687px;top:215px;">O2V</div>
<div class="t" style="left:850px;top:215px;">C 1 2/m 1</div>
<div class="t" style="right:802px;top:215px;letter-spacing:-0.3px">12</div>
<div class="t" style="left:1030px;top:215px;letter-spacing:-0.6px">12.152,3.720,6.347,90.00,107.58,90.00</div>
<div class="a" style="left:323px;top:231px;width:40px;height:19px;background:#a8dcbc"></div>
<div class="a" style="left:304px;top:249px;width:1493px;height:1px;background:#f0f0f0"></div>
<div class="a" style="left:561px;top:231px;width:1px;height:19px;background:#f0f0f0"></div>
<div class="a" style="left:620px;top:231px;width:1px;height:19px;background:#f0f0f0"></div>
<div class="a" style="left:680px;top:231px;width:1px;height:19px;background:#f0f0f0"></div>
<div class="a" style="left:844px;top:231px;width:1px;height:19px;background:#f0f0f0"></div>
<div class="a" style="left:964px;top:231px;width:1px;height:19px;background:#f0f0f0"></div>
<div class="a" style="left:1023px;top:231px;width:1px;height:19px;background:#f0f0f0"></div>
<div class="a" style="left:1237px;top:231px;width:1px;height:19px;background:#f0f0f0"></div>
<svg style="left:308px;top:233px" width="13" height="13" viewBox="0 0 13 13"><rect x="0" y="0" width="13" height="13" fill="#fff"/><path d="M0.5 0v13M3.5 0v13M6.5 0v13M9.5 0v13M12.5 0v13M0 0.5h13M0 3.5h13M0 6.5h13M0 9.5h13M0 12.5h13" stroke="#555" stroke-width="1" opacity="0.75"/></svg>
<div class="t" style="left:325px;top:234px;">6</div>
<div class="t" style="left:369px;top:234px;letter-spacing:-0.3px">541661</div>
<div class="t" style="right:1205px;top:234px;">1</div>
<div class="t" style="left:627px;top:234px;letter-spacing:-0.3px">541661</div>
<div class="t" style="left:687px;top:234px;">O7V4</div>
<div class="t" style="left:850px;top:234px;">A1-</div>
<div class="t" style="right:802px;top:234px;letter-spacing:-0.3px">2</div>
<div class="t" style="left:1030px;top:234px;letter-spacing:-0.6px">5.509,7.008,12.258,95.09,95.19,109.21</div>
<div class="a" style="left:323px;top:250px;width:40px;height:19px;background:#f8dc70"></div>
<div class="a" style="left:304px;top:268px;width:1493px;height:1px;background:#f0f0f0"></div>
<div class="a" style="left:561px;top:250px;width:1px;height:19px;background:#f0f0f0"></div>
<div class="a" style="left:620px;top:250px;width:1px;height:19px;background:#f0f0f0"></div>
<div class="a" style="left:680px;top:250px;width:1px;height:19px;background:#f0f0f0"></div>
<div class="a" style="left:844px;top:250px;width:1px;height:19px;background:#f0f0f0"></div>
<div class="a" style="left:964px;top:250px;width:1px;height:19px;background:#f0f0f0"></div>
<div class="a" style="left:1023px;top:250px;width:1px;height:19px;background:#f0f0f0"></div>
<div class="a" style="left:1237px;top:250px;width:1px;height:19px;background:#f0f0f0"></div>
<svg style="left:308px;top:252px" width="13" height="13" viewBox="0 0 13 13"><rect x="0" y="0" width="13" height="13" fill="#fff"/><path d="M0.5 0v13M3.5 0v13M6.5 0v13M9.5 0v13M12.5 0v13M0 0.5h13M0 3.5h13M0 6.5h13M0 9.5h13M0 12.5h13" stroke="#555" stroke-width="1" opacity="0.75"/></svg>
<div class="t" style="left:325px;top:253px;">7</div>
<div class="t" style="left:369px;top:253px;letter-spacing:-0.3px">541662</div>
<div class="t" style="right:1205px;top:253px;">1</div>
<div class="t" style="left:627px;top:253px;letter-spacing:-0.3px">541662</div>
<div class="t" style="left:687px;top:253px;">O7V4</div>
<div class="t" style="left:850px;top:253px;">A1-</div>
<div class="t" style="right:802px;top:253px;letter-spacing:-0.3px">2</div>
<div class="t" style="left:1030px;top:253px;letter-spacing:-0.6px">5.514,7.004,12.260,94.86,95.14,109.30</div>
<div class="a" style="left:323px;top:269px;width:40px;height:19px;background:#d8c0f4"></div>
<div class="a" style="left:304px;top:287px;width:1493px;height:1px;background:#f0f0f0"></div>
<div class="a" style="left:561px;top:269px;width:1px;height:19px;background:#f0f0f0"></div>
<div class="a" style="left:620px;top:269px;width:1px;height:19px;background:#f0f0f0"></div>
<div class="a" style="left:680px;top:269px;width:1px;height:19px;background:#f0f0f0"></div>
<div class="a" style="left:844px;top:269px;width:1px;height:19px;background:#f0f0f0"></div>
<div class="a" style="left:964px;top:269px;width:1px;height:19px;background:#f0f0f0"></div>
<div class="a" style="left:1023px;top:269px;width:1px;height:19px;background:#f0f0f0"></div>
<div class="a" style="left:1237px;top:269px;width:1px;height:19px;background:#f0f0f0"></div>
<svg style="left:308px;top:271px" width="13" height="13" viewBox="0 0 13 13"><rect x="0" y="0" width="13" height="13" fill="#fff"/><path d="M0.5 0v13M3.5 0v13M6.5 0v13M9.5 0v13M12.5 0v13M0 0.5h13M0 3.5h13M0 6.5h13M0 9.5h13M0 12.5h13" stroke="#555" stroke-width="1" opacity="0.75"/></svg>
<div class="t" style="left:325px;top:272px;">8</div>
<div class="t" style="left:369px;top:272px;letter-spacing:-0.3px">541670</div>
<div class="t" style="right:1205px;top:272px;">1</div>
<div class="t" style="left:627px;top:272px;letter-spacing:-0.3px">541670</div>
<div class="t" style="left:687px;top:272px;">O2V</div>
<div class="t" style="left:850px;top:272px;">C 1 2/m 1</div>
<div class="t" style="right:802px;top:272px;letter-spacing:-0.3px">12</div>
<div class="t" style="left:1030px;top:272px;letter-spacing:-0.6px">12.030,3.693,6.420,90.00,106.60,90.00</div>
<div class="a" style="left:1797px;top:112px;width:16px;height:175px;background:#f0f0f0"></div>
<div class="a" style="left:1798px;top:129px;width:14px;height:57px;background:#cdcdcd"></div>
<svg style="left:1800px;top:117px" width="10" height="8"><path d="M1 6l4-4 4 4" fill="none" stroke="#606060" stroke-width="1.6"/></svg>
<svg style="left:1800px;top:276px" width="10" height="8"><path d="M1 2l4 4 4-4" fill="none" stroke="#606060" stroke-width="1.6"/></svg>
<div class="a" style="left:281px;top:294px;width:889px;height:674px;background:#f0f0f0"></div>
<div class="a" style="left:282px;top:293px;width:883px;height:29px;background:#f0f0f0;border:1px solid #a0a0a0;border-bottom:none"></div>
<svg style="left:287px;top:304px" width="12" height="9"><rect x="0" y="0" width="4" height="3" fill="#707070"/><rect x="6" y="0" width="4" height="3" fill="#707070"/><rect x="0" y="5" width="4" height="3" fill="#707070"/><rect x="6" y="5" width="4" height="3" fill="#707070"/></svg>
<div class="a" style="left:283px;top:318px;width:882px;height:4px;background:#a8d4fa;border-top:1px solid #a0a0a0"></div>
<div class="a" style="left:307px;top:296px;width:150px;height:23px;background:linear-gradient(#d6ebfc,#a6d4fa);border:1px solid #a0a0a0;border-bottom:none;box-shadow:inset 1px 1px 0 #fff"></div>
<div class="a" style="left:308px;top:318px;width:148px;height:1px;background:#a6d4fa"></div>
<div class="t" style="left:334px;top:301px;letter-spacing:-0.45px">455496 :: Picture 1</div>
<div class="a" style="left:462px;top:298px;width:38px;height:21px;background:linear-gradient(#f4f4f4,#d8d8d8);border:1px solid #a0a0a0;border-bottom:none;box-shadow:inset 1px 1px 0 #fff,inset -1px 0 0 #fff"></div>
<svg style="left:466px;top:301px" width="16" height="14" viewBox="0 0 16 14"><rect x="2.5" y="3.5" width="12" height="9" fill="#fff" stroke="#3060a0"/><rect x="3" y="4" width="11" height="2" fill="#4a80d0"/><path d="M3 0l1 3M0 3l3 0M1 1l2 2" stroke="#f0d000" stroke-width="1.4"/></svg>
<svg style="left:488px;top:306px" width="7" height="4"><path d="M0 0h6l-3 3z" fill="#909090"/></svg>
<svg style="left:1150px;top:303px" width="11" height="9"><path d="M1 1l3.5 3.5L1 8M5.5 1L9 4.5 5.5 8" fill="none" stroke="#707070" stroke-width="1.8"/></svg>
<div class="a" style="left:283px;top:322px;width:882px;height:618px;background:#000"></div>
<div class="a" style="left:281px;top:293px;width:2px;height:675px;background:#f0f0f0"></div>
<div class="a" style="left:282px;top:322px;width:1px;height:618px;background:#a0a0a0"></div>
<div class="a" style="left:282px;top:940px;width:883px;height:27px;background:#fff"></div>
<div class="a" style="left:283px;top:943px;width:882px;height:24px;background:#f0f0f0;border-top:1px solid #a0a0a0"></div>
<div class="a" style="left:283px;top:944px;width:15px;height:22px;background:#f0f0f0;border:1px solid #a0a0a0;border-top:none"></div>
<svg style="left:285px;top:948px" width="10" height="15"><path d="M1 5l4-4 4 4z" fill="#808080"/><path d="M1 9l4 4 4-4z" fill="#808080"/></svg>
<div class="a" style="left:300px;top:944px;width:22px;height:22px;border:1px solid #a0a0a0;border-top:none;border-bottom:none"></div>
<svg style="left:306px;top:951px" width="10" height="9"><rect x="0.5" y="0.5" width="9" height="7" fill="#fff" stroke="#808080"/><path d="M0 3.5h10M0 5.5h10M3.5 0v8M6.5 0v8" stroke="#808080"/></svg>
<div class="a" style="left:324px;top:944px;width:118px;height:22px;background:#a8d4f4;border:1px solid #a0a0a0;border-top:none"></div>
<div class="t" style="left:330px;top:948px;letter-spacing:-0.45px">2040764 :: Picture 1</div>
<div class="a" style="left:443px;top:944px;width:118px;height:22px;background:#a8dcbc;border:1px solid #a0a0a0;border-top:none"></div>
<div class="t" style="left:449px;top:948px;letter-spacing:-0.45px">2040765 :: Picture 1</div>
<div class="a" style="left:562px;top:944px;width:118px;height:22px;background:#f4dc78;border:1px solid #a0a0a0;border-top:none"></div>
<div class="t" style="left:568px;top:948px;letter-spacing:-0.45px">452452 :: Picture 1</div>
<div class="a" style="left:681px;top:944px;width:118px;height:22px;background:#d8c0f0;border:1px solid #a0a0a0;border-top:none"></div>
<div class="t" style="left:687px;top:948px;letter-spacing:-0.45px">452453 :: Picture 1</div>
<div class="a" style="left:800px;top:944px;width:118px;height:22px;background:#a8dcbc;border:1px solid #a0a0a0;border-top:none"></div>
<div class="t" style="left:806px;top:948px;letter-spacing:-0.45px">541661 :: Picture 1</div>
<div class="a" style="left:919px;top:944px;width:118px;height:22px;background:#f4dc78;border:1px solid #a0a0a0;border-top:none"></div>
<div class="t" style="left:925px;top:948px;letter-spacing:-0.45px">541662 :: Picture 1</div>
<div class="a" style="left:1038px;top:944px;width:86px;height:22px;background:#d8c0f0;border:1px solid #a0a0a0;border-top:none"></div>
<div class="t" style="left:1044px;top:948px;letter-spacing:-0.45px">541670 :: Pic...</div>
<svg style="left:1133px;top:950px" width="28" height="10"><path d="M8 1v8L2 5z" fill="#808080"/><path d="M19 1v8l6-4z" fill="#808080"/></svg>
<svg style="left:283px;top:322px" width="882" height="618" viewBox="283 322 882 618"><defs>
<radialGradient id="gO" cx="0.62" cy="0.36" r="0.8" fx="0.6" fy="0.36"><stop offset="0" stop-color="#ffe8e8"/><stop offset="0.05" stop-color="#ff8080"/><stop offset="0.12" stop-color="#ff0000"/><stop offset="0.45" stop-color="#f20000"/><stop offset="0.78" stop-color="#b40000"/><stop offset="1" stop-color="#7a0000"/></radialGradient>
<radialGradient id="gV" cx="0.6" cy="0.37" r="0.72" fx="0.64" fy="0.33"><stop offset="0" stop-color="#ffffff"/><stop offset="0.12" stop-color="#f0f0f0"/><stop offset="0.5" stop-color="#cdcdcd"/><stop offset="0.85" stop-color="#a0a0a0"/><stop offset="1" stop-color="#858585"/></radialGradient>
</defs><g id="mainAll"><path d="M339 378L329 344M339 378H370" stroke="#ddd" stroke-width="1"/><path d="M326 341l9 9-5 1z" fill="#fff"/><path d="M378 378l-9 -4v8z" fill="#fff"/><text x="319" y="337" fill="#fff" font-size="12" font-family="Liberation Sans">c</text><text x="384" y="381" fill="#fff" font-size="12" font-family="Liberation Sans">a</text><line x1="449" y1="418" x2="444" y2="466" stroke="#f0a000" stroke-width="5.5" stroke-dasharray="7 5"/><line x1="773" y1="418" x2="768" y2="466" stroke="#f0a000" stroke-width="5.5" stroke-dasharray="7 5"/><line x1="679" y1="794" x2="676" y2="845" stroke="#f0a000" stroke-width="5.5" stroke-dasharray="7 5"/><line x1="1003" y1="794" x2="1000" y2="845" stroke="#f0a000" stroke-width="5.5" stroke-dasharray="7 5"/><line x1="381" y1="578" x2="440" y2="576" stroke="#f0a000" stroke-width="5" stroke-dasharray="9 5"/><line x1="429" y1="595" x2="388" y2="645" stroke="#f0a000" stroke-width="5" stroke-dasharray="14 9.5"/><line x1="395" y1="683" x2="453" y2="680" stroke="#f0a000" stroke-width="5" stroke-dasharray="9 6"/><line x1="1011" y1="580" x2="1052" y2="578" stroke="#f0a000" stroke-width="5" stroke-dasharray="7 6"/><line x1="1017" y1="668" x2="1062" y2="614" stroke="#f0a000" stroke-width="5" stroke-dasharray="11 8"/><line x1="1015" y1="685" x2="1070" y2="683" stroke="#f0a000" stroke-width="5" stroke-dasharray="8 6"/><circle cx="557" cy="582" r="13.4" fill="url(#gO)"/><circle cx="668" cy="578" r="13.4" fill="url(#gO)"/><circle cx="881" cy="582" r="13.4" fill="url(#gO)"/><circle cx="566" cy="678" r="13.4" fill="url(#gO)"/><circle cx="889" cy="678" r="13.4" fill="url(#gO)"/><line x1="576" y1="470" x2="569" y2="557" stroke="#f0a000" stroke-width="4.3"/><line x1="900" y1="470" x2="893" y2="557" stroke="#f0a000" stroke-width="4.3"/><line x1="444" y1="575" x2="569" y2="557" stroke="#f0a000" stroke-width="4.6"/><line x1="444" y1="575" x2="569" y2="557" stroke="#a06800" stroke-width="2.3" stroke-dasharray="6 8" opacity="0.8"/><line x1="768" y1="574" x2="893" y2="557" stroke="#f0a000" stroke-width="4.6"/><line x1="768" y1="574" x2="893" y2="557" stroke="#a06800" stroke-width="2.3" stroke-dasharray="6 8" opacity="0.8"/><line x1="555" y1="703" x2="679" y2="686" stroke="#f0a000" stroke-width="4.6"/><line x1="555" y1="703" x2="679" y2="686" stroke="#a06800" stroke-width="2.3" stroke-dasharray="6 8" opacity="0.8"/><line x1="878" y1="703" x2="1003" y2="686" stroke="#f0a000" stroke-width="4.6"/><line x1="878" y1="703" x2="1003" y2="686" stroke="#a06800" stroke-width="2.3" stroke-dasharray="6 8" opacity="0.8"/><line x1="444" y1="575" x2="555" y2="703" stroke="#f0a000" stroke-width="4.3"/><line x1="569" y1="557" x2="679" y2="686" stroke="#f0a000" stroke-width="4.3"/><line x1="768" y1="574" x2="679" y2="686" stroke="#f0a000" stroke-width="4.3"/><line x1="768" y1="574" x2="878" y2="703" stroke="#f0a000" stroke-width="4.3"/><line x1="893" y1="557" x2="1003" y2="686" stroke="#f0a000" stroke-width="4.3"/><line x1="679" y1="686" x2="778" y2="680" stroke="#f0a000" stroke-width="4.3"/><line x1="668" y1="581" x2="768" y2="578" stroke="#f0a000" stroke-width="4.3"/><line x1="555" y1="703" x2="546" y2="790" stroke="#f0a000" stroke-width="4.3"/><line x1="878" y1="703" x2="871" y2="790" stroke="#f0a000" stroke-width="4.3"/><circle cx="444" cy="466" r="13.4" fill="url(#gO)"/><circle cx="576" cy="470" r="13.4" fill="url(#gO)"/><circle cx="768" cy="466" r="13.4" fill="url(#gO)"/><circle cx="900" cy="470" r="13.4" fill="url(#gO)"/><circle cx="453" cy="680" r="13.4" fill="url(#gO)"/><circle cx="778" cy="680" r="13.4" fill="url(#gO)"/><circle cx="993" cy="580" r="13.4" fill="url(#gO)"/><circle cx="546" cy="790" r="13.4" fill="url(#gO)"/><circle cx="679" cy="794" r="13.4" fill="url(#gO)"/><circle cx="871" cy="790" r="13.4" fill="url(#gO)"/><circle cx="1003" cy="794" r="13.4" fill="url(#gO)"/><circle cx="444" cy="575" r="20.5" fill="url(#gV)"/><circle cx="569" cy="557" r="20.5" fill="url(#gV)"/><circle cx="768" cy="574" r="20.5" fill="url(#gV)"/><circle cx="893" cy="557" r="20.5" fill="url(#gV)"/><circle cx="555" cy="703" r="20.5" fill="url(#gV)"/><circle cx="679" cy="686" r="20.5" fill="url(#gV)"/><circle cx="878" cy="703" r="20.5" fill="url(#gV)"/><circle cx="1003" cy="686" r="20.5" fill="url(#gV)"/><circle cx="450" cy="572" r="13.4" fill="url(#gO)"/><circle cx="998" cy="688" r="13.4" fill="url(#gO)"/><ellipse cx="447" cy="574" rx="3" ry="2.3" fill="#f0a000"/><ellipse cx="1000" cy="687" rx="3" ry="2.3" fill="#f0a000"/><circle cx="678" cy="688" r="2" fill="#f0a000"/><circle cx="770" cy="575" r="2" fill="#f0a000"/><path d="M348.5 469.5H997.5L1099.5 792.5H450.5Z" fill="none" stroke="#fff" stroke-width="1.2"/><rect x="1121" y="894" width="42" height="45" fill="#000" stroke="#808080" stroke-width="2"/><circle cx="1131" cy="905" r="9" fill="url(#gV)"/><circle cx="1131" cy="927" r="9" fill="url(#gO)"/><text x="1140" y="909" fill="#fff" font-size="11" font-family="Liberation Sans">V+0</text><text x="1140" y="931" fill="#fff" font-size="11" font-family="Liberation Sans">O+0</text></g></svg>
<div class="a" style="left:575px;top:574px;width:194px;height:35px;background:#fff;border:1px solid #767676"></div>
<div class="t" style="left:581px;top:577px;color:#575757;letter-spacing:-0.1px">"V(1)" (4i: m)</div>
<div class="t" style="left:581px;top:592px;color:#575757;letter-spacing:-0.15px">x/a, y/b, z/c: 0.2964(3), 0, 0.7249(7)</div>
<div class="a" style="left:1165px;top:294px;width:652px;height:674px;background:#f0f0f0"></div>
<div class="a" style="left:1170px;top:293px;width:645px;height:340px;background:#fff;border:1px solid #a0a0a0"></div>
<div class="a" style="left:1171px;top:294px;width:643px;height:25px;background:#f0f0f0;border-bottom:1px solid #a0a0a0"></div>
<div class="t" style="left:1178px;top:300px;font-size:11.5px">Data sheet</div>
<svg style="left:1239px;top:310px" width="6" height="4"><path d="M0 0h6l-3 3z" fill="#a0a0a0"/></svg>
<svg style="left:1798px;top:301px" width="10" height="10"><path d="M1 1l8 8M9 1l-8 8" stroke="#707070" stroke-width="1.8"/></svg>
<div class="a" style="left:1182px;top:335px;width:386px;height:15px;background:#a8d8fc"></div>
<div class="t" style="left:1178px;width:400px;text-align:center;top:336px;font-weight:bold;line-height:15px">General</div>
<div class="a" style="left:1182px;top:356px;width:92px;height:15px;background:#a8d8fc"></div>
<div class="t" style="left:1185px;top:357px;font-weight:bold;line-height:15px;letter-spacing:-0.25px">Origin</div>
<div class="t" style="left:1281px;top:357px;line-height:15px">455496</div>
<div class="a" style="left:1182px;top:372px;width:92px;height:15px;background:#a8d8fc"></div>
<div class="t" style="left:1185px;top:373px;font-weight:bold;line-height:15px;letter-spacing:-0.25px">Formula</div>
<div class="t" style="left:1281px;top:373px;line-height:15px">VO2(B)</div>
<div class="a" style="left:1182px;top:404px;width:386px;height:15px;background:#a8d8fc"></div>
<div class="t" style="left:1178px;width:400px;text-align:center;top:405px;font-weight:bold;line-height:15px">Bibliographic data</div>
<div class="a" style="left:1182px;top:425px;width:92px;height:15px;background:#a8d8fc"></div>
<div class="t" style="left:1185px;top:426px;font-weight:bold;line-height:15px;letter-spacing:-0.25px">Author(s)</div>
<div class="t" style="left:1281px;top:426px;line-height:15px;letter-spacing:-0.1px">Oka Y., Yao T., Yamamoto N., Ueda Y., Hayashi A.</div>
<div class="a" style="left:1182px;top:441px;width:92px;height:15px;background:#a8d8fc"></div>
<div class="t" style="left:1185px;top:442px;font-weight:bold;line-height:15px;letter-spacing:-0.25px">Publication title</div>
<div class="t" style="left:1281px;top:442px;line-height:15px;letter-spacing:-0.2px">Phase Transition and V4+-V4+ Pairing in VO2(B)</div>
<div class="a" style="left:1182px;top:457px;width:92px;height:15px;background:#a8d8fc"></div>
<div class="t" style="left:1185px;top:458px;font-weight:bold;line-height:15px;letter-spacing:-0.25px">Citation</div>
<div class="t" style="left:1281px;top:458px;line-height:15px;letter-spacing:-0.3px">Journal of Solid State Chemistry, 105, 271-278 (1993)</div>
<div class="a" style="left:1182px;top:489px;width:386px;height:15px;background:#a8d8fc"></div>
<div class="t" style="left:1178px;width:400px;text-align:center;top:490px;font-weight:bold;line-height:15px">Phase data</div>
<div class="a" style="left:1182px;top:510px;width:92px;height:15px;background:#a8d8fc"></div>
<div class="t" style="left:1185px;top:511px;font-weight:bold;line-height:15px;letter-spacing:-0.25px">Space-group</div>
<div class="t" style="left:1281px;top:511px;line-height:15px">C 1 2/m 1 (12) - monoclinic</div>
<div class="a" style="left:1182px;top:526px;width:92px;height:33px;background:#a8d8fc"></div>
<div class="t" style="left:1185px;top:536px;font-weight:bold;line-height:15px;letter-spacing:-0.25px">Cell</div>
<div class="t" style="left:1281px;top:528px;line-height:15px;letter-spacing:-0.35px">a=12.152(2) Å b=3.7199(5) Å c=6.347(1) Å β=107.58(3)°</div>
<div class="t" style="left:1281px;top:544px;line-height:15px;letter-spacing:-0.3px">V=273.51(9) Å<sup style="font-size:9px;vertical-align:5px;line-height:0">3</sup></div>
<div class="a" style="left:1182px;top:577px;width:268px;height:15px;background:#a8d8fc"></div>
<div class="t" style="left:1119px;width:400px;text-align:center;top:578px;font-weight:bold;line-height:15px">Atomic parameters</div>
<div class="a" style="left:1182px;top:598px;width:34px;height:15px;background:#a8d8fc"></div>
<div class="t" style="left:1000px;width:400px;text-align:center;top:599px;font-weight:bold;line-height:15px;letter-spacing:-0.2px">Atom</div>
<div class="t" style="left:999px;width:400px;text-align:center;top:614px;line-height:15px;letter-spacing:-0.3px">V(1)</div>
<div class="a" style="left:1218px;top:598px;width:22px;height:15px;background:#a8d8fc"></div>
<div class="t" style="left:1030px;width:400px;text-align:center;top:599px;font-weight:bold;line-height:15px;letter-spacing:-0.2px">Ox.</div>
<div class="t" style="left:1029px;width:400px;text-align:center;top:614px;line-height:15px;letter-spacing:-0.3px">0</div>
<div class="a" style="left:1242px;top:598px;width:38px;height:15px;background:#a8d8fc"></div>
<div class="t" style="left:1062px;width:400px;text-align:center;top:599px;font-weight:bold;line-height:15px;letter-spacing:-0.2px">Wyck.</div>
<div class="t" style="left:1061px;width:400px;text-align:center;top:614px;line-height:15px;letter-spacing:-0.3px">4i</div>
<div class="a" style="left:1282px;top:598px;width:25px;height:15px;background:#a8d8fc"></div>
<div class="t" style="left:1095px;width:400px;text-align:center;top:599px;font-weight:bold;line-height:15px;letter-spacing:-0.2px">Site</div>
<div class="t" style="left:1094px;width:400px;text-align:center;top:614px;line-height:15px;letter-spacing:-0.3px">m</div>
<div class="a" style="left:1309px;top:598px;width:57px;height:15px;background:#a8d8fc"></div>
<div class="t" style="left:1138px;width:400px;text-align:center;top:599px;font-weight:bold;line-height:15px;letter-spacing:-0.2px">x/a</div>
<div class="t" style="left:1137px;width:400px;text-align:center;top:614px;line-height:15px;letter-spacing:-0.3px">0.2964(3)</div>
<div class="a" style="left:1368px;top:598px;width:21px;height:15px;background:#a8d8fc"></div>
<div class="t" style="left:1179px;width:400px;text-align:center;top:599px;font-weight:bold;line-height:15px;letter-spacing:-0.2px">y/b</div>
<div class="t" style="left:1178px;width:400px;text-align:center;top:614px;line-height:15px;letter-spacing:-0.3px">0</div>
<div class="a" style="left:1391px;top:598px;width:59px;height:15px;background:#a8d8fc"></div>
<div class="t" style="left:1221px;width:400px;text-align:center;top:599px;font-weight:bold;line-height:15px;letter-spacing:-0.2px">z/c</div>
<div class="t" style="left:1220px;width:400px;text-align:center;top:614px;line-height:15px;letter-spacing:-0.3px">0.7249(7)</div>
<div class="a" style="left:1797px;top:319px;width:16px;height:313px;background:#f0f0f0"></div>
<div class="a" style="left:1798px;top:353px;width:14px;height:188px;background:#cdcdcd"></div>
<svg style="left:1800px;top:336px" width="10" height="8"><path d="M1 6l4-4 4 4" fill="none" stroke="#606060" stroke-width="1.6"/></svg>
<svg style="left:1800px;top:606px" width="10" height="8"><path d="M1 2l4 4 4-4" fill="none" stroke="#606060" stroke-width="1.6"/></svg>
<div class="a" style="left:1170px;top:637px;width:645px;height:330px;background:#fff;border:1px solid #a0a0a0"></div>
<div class="a" style="left:1171px;top:638px;width:643px;height:19px;background:#f0f0f0;border-bottom:1px solid #a0a0a0"></div>
<div class="t" style="left:1177px;top:641px;font-size:11.5px">Properties</div>
<svg style="left:1798px;top:642px" width="10" height="10"><path d="M1 1l8 8M9 1l-8 8" stroke="#707070" stroke-width="1.8"/></svg>
<div class="a" style="left:1171px;top:657px;width:643px;height:26px;background:#f0f0f0"></div>
<div class="a" style="left:1173px;top:659px;width:639px;height:22px;background:#fff;border:1px solid #7a7a7a"></div>
<div class="t" style="left:1178px;top:662px;letter-spacing:-0.5px">Structure picture contents</div>
<svg style="left:1798px;top:667px" width="11" height="7"><path d="M1 1l4.5 4.5L10 1" fill="none" stroke="#404040" stroke-width="1"/></svg>
<div class="a" style="left:1452px;top:683px;width:1px;height:283px;background:#f0f0f0"></div>
<div class="a" style="left:1521px;top:683px;width:1px;height:283px;background:#f0f0f0"></div>
<div class="a" style="left:1590px;top:683px;width:1px;height:283px;background:#f0f0f0"></div>
<div class="a" style="left:1171px;top:683px;width:626px;height:283px;overflow:hidden">
<div class="a" style="left:0;top:43px;width:626px;height:1px;background:#f0f0f0"></div>
<div class="t" style="left:6px;top:28px">Atomic parameters (asym. sites, sym.eq. pos.)</div>
<div class="t" style="left:244px;width:100px;text-align:right;top:28px">6</div>
<div class="t" style="left:313px;width:100px;text-align:right;top:28px">(6, 0)</div>
<div class="a" style="left:0;top:62px;width:626px;height:1px;background:#f0f0f0"></div>
<div class="t" style="left:6px;top:47px">Symmetry records</div>
<div class="t" style="left:244px;width:100px;text-align:right;top:47px">4</div>
<div class="t" style="left:313px;width:100px;text-align:right;top:47px"></div>
<div class="a" style="left:0;top:81px;width:626px;height:1px;background:#f0f0f0"></div>
<div class="t" style="left:6px;top:66px">Atoms in unit cell</div>
<div class="t" style="left:244px;width:100px;text-align:right;top:66px">24</div>
<div class="t" style="left:313px;width:100px;text-align:right;top:66px"></div>
<div class="a" style="left:0;top:100px;width:626px;height:1px;background:#f0f0f0"></div>
<div class="t" style="left:6px;top:85px">Bond parameters (non-bonding contacts, H-bonds)</div>
<div class="t" style="left:244px;width:100px;text-align:right;top:85px">0</div>
<div class="t" style="left:313px;width:100px;text-align:right;top:85px">(0, 0)</div>
<div class="a" style="left:0;top:119px;width:626px;height:1px;background:#f0f0f0"></div>
<div class="t" style="left:6px;top:104px">Molecular units (mol./polym. sites)</div>
<div class="t" style="left:244px;width:100px;text-align:right;top:104px">1</div>
<div class="t" style="left:313px;width:100px;text-align:right;top:104px">(0, 5)</div>
<div class="a" style="left:0;top:138px;width:626px;height:1px;background:#f0f0f0"></div>
<div class="t" style="left:6px;top:123px">Created atoms</div>
<div class="t" style="left:244px;width:100px;text-align:right;top:123px">64</div>
<div class="t" style="left:313px;width:100px;text-align:right;top:123px"></div>
<div class="a" style="left:0;top:157px;width:626px;height:1px;background:#f0f0f0"></div>
<div class="t" style="left:6px;top:142px">Created bonds (H-bonds/contacts)</div>
<div class="t" style="left:244px;width:100px;text-align:right;top:142px">62</div>
<div class="t" style="left:313px;width:100px;text-align:right;top:142px">(0, 0)</div>
<div class="a" style="left:0;top:176px;width:626px;height:1px;background:#f0f0f0"></div>
<div class="t" style="left:6px;top:161px">Created molecules (complete)</div>
<div class="t" style="left:244px;width:100px;text-align:right;top:161px">0</div>
<div class="t" style="left:313px;width:100px;text-align:right;top:161px">(0)</div>
<div class="a" style="left:0;top:195px;width:626px;height:1px;background:#f0f0f0"></div>
<div class="t" style="left:6px;top:180px">Cell corners</div>
<div class="t" style="left:244px;width:100px;text-align:right;top:180px">8</div>
<div class="t" style="left:313px;width:100px;text-align:right;top:180px"></div>
<div class="a" style="left:0;top:214px;width:626px;height:1px;background:#f0f0f0"></div>
<div class="t" style="left:6px;top:199px">Cell edges</div>
<div class="t" style="left:244px;width:100px;text-align:right;top:199px">12</div>
<div class="t" style="left:313px;width:100px;text-align:right;top:199px"></div>
<div class="a" style="left:0;top:233px;width:626px;height:1px;background:#f0f0f0"></div>
<div class="t" style="left:6px;top:218px">Atom labels</div>
<div class="t" style="left:244px;width:100px;text-align:right;top:218px">0</div>
<div class="t" style="left:313px;width:100px;text-align:right;top:218px"></div>
<div class="a" style="left:0;top:252px;width:626px;height:1px;background:#f0f0f0"></div>
<div class="t" style="left:6px;top:237px">Bond labels</div>
<div class="t" style="left:244px;width:100px;text-align:right;top:237px">0</div>
<div class="t" style="left:313px;width:100px;text-align:right;top:237px"></div>
<div class="a" style="left:0;top:271px;width:626px;height:1px;background:#f0f0f0"></div>
<div class="t" style="left:6px;top:256px">Texts</div>
<div class="t" style="left:244px;width:100px;text-align:right;top:256px">0</div>
<div class="t" style="left:313px;width:100px;text-align:right;top:256px"></div>
<div class="a" style="left:0;top:290px;width:626px;height:1px;background:#f0f0f0"></div>
<div class="t" style="left:6px;top:275px">Polyhedra</div>
<div class="t" style="left:244px;width:100px;text-align:right;top:275px">0</div>
<div class="t" style="left:313px;width:100px;text-align:right;top:275px"></div>
</div>
<div class="a" style="left:1797px;top:683px;width:16px;height:283px;background:#f0f0f0"></div>
<div class="a" style="left:1798px;top:700px;width:14px;height:141px;background:#cdcdcd"></div>
<svg style="left:1800px;top:688px" width="10" height="8"><path d="M1 6l4-4 4 4" fill="none" stroke="#606060" stroke-width="1.6"/></svg>
<svg style="left:1800px;top:953px" width="10" height="8"><path d="M1 2l4 4 4-4" fill="none" stroke="#606060" stroke-width="1.6"/></svg>
<div class="a" style="left:0px;top:968px;width:1817px;height:26px;background:#d6dbe9"></div>
<div class="a" style="left:2px;top:968px;width:766px;height:25px;background:#cfd6e5;border:1px solid #dde2ec;border-left-color:#d6dbe9"></div>
<div class="a" style="left:770px;top:968px;width:251px;height:25px;background:#cfd6e5;border:1px solid #dde2ec;border-left-color:#d6dbe9"></div>
<div class="a" style="left:1022px;top:968px;width:122px;height:25px;background:#cfd6e5;border:1px solid #dde2ec;border-left-color:#d6dbe9"></div>
<div class="a" style="left:11px;top:972px;width:1px;height:1px;background:#6f7b92"></div><div class="a" style="left:13px;top:974px;width:1px;height:1px;background:#6f7b92"></div><div class="a" style="left:11px;top:976px;width:1px;height:1px;background:#6f7b92"></div><div class="a" style="left:13px;top:978px;width:1px;height:1px;background:#6f7b92"></div><div class="a" style="left:11px;top:980px;width:1px;height:1px;background:#6f7b92"></div><div class="a" style="left:13px;top:982px;width:1px;height:1px;background:#6f7b92"></div><div class="a" style="left:11px;top:984px;width:1px;height:1px;background:#6f7b92"></div><div class="a" style="left:13px;top:986px;width:1px;height:1px;background:#6f7b92"></div><div class="a" style="left:11px;top:988px;width:1px;height:1px;background:#6f7b92"></div>
<div class="a" style="left:776px;top:972px;width:1px;height:1px;background:#6f7b92"></div><div class="a" style="left:778px;top:974px;width:1px;height:1px;background:#6f7b92"></div><div class="a" style="left:776px;top:976px;width:1px;height:1px;background:#6f7b92"></div><div class="a" style="left:778px;top:978px;width:1px;height:1px;background:#6f7b92"></div><div class="a" style="left:776px;top:980px;width:1px;height:1px;background:#6f7b92"></div><div class="a" style="left:778px;top:982px;width:1px;height:1px;background:#6f7b92"></div><div class="a" style="left:776px;top:984px;width:1px;height:1px;background:#6f7b92"></div><div class="a" style="left:778px;top:986px;width:1px;height:1px;background:#6f7b92"></div><div class="a" style="left:776px;top:988px;width:1px;height:1px;background:#6f7b92"></div>
<div class="a" style="left:1031px;top:972px;width:1px;height:1px;background:#6f7b92"></div><div class="a" style="left:1033px;top:974px;width:1px;height:1px;background:#6f7b92"></div><div class="a" style="left:1031px;top:976px;width:1px;height:1px;background:#6f7b92"></div><div class="a" style="left:1033px;top:978px;width:1px;height:1px;background:#6f7b92"></div><div class="a" style="left:1031px;top:980px;width:1px;height:1px;background:#6f7b92"></div><div class="a" style="left:1033px;top:982px;width:1px;height:1px;background:#6f7b92"></div><div class="a" style="left:1031px;top:984px;width:1px;height:1px;background:#6f7b92"></div><div class="a" style="left:1033px;top:986px;width:1px;height:1px;background:#6f7b92"></div><div class="a" style="left:1031px;top:988px;width:1px;height:1px;background:#6f7b92"></div>
<div class="a" style="left:0px;top:994px;width:1817px;height:21px;background:#005894;border-top:1px solid #004a8a;border-bottom:1px solid #2b2b30"></div>
<div class="t" style="left:4px;top:997px;color:#fff;font-size:11.5px">Success. 96 atoms created.</div>
<div class="a" style="left:1200px;top:997px;width:96px;height:17px;background:#c0ccdc"></div>
<div class="t" style="left:1202px;top:998px;color:#000">Manual</div>
<div class="t" style="left:1320px;top:998px;color:#fff;letter-spacing:-0.2px">1.41172</div>
<div class="t" style="left:1434px;top:998px;color:#fff">0</div>
<div class="t" style="left:1462px;top:998px;color:#fff">6 parms</div>
<div class="t" style="left:1533px;top:998px;color:#fff">64 atoms</div>
<div class="t" style="left:1604px;top:998px;color:#fff">62 bonds</div>
<div class="t" style="left:1675px;top:998px;color:#fff">polymeric</div>
<div class="t" style="left:1739px;top:998px;color:#fff">0 polyh.</div>
<svg style="left:24px;top:61px" width="16" height="16" viewBox="0 0 16 16"><rect x="3.5" y="4.5" width="10" height="11" fill="#fff" stroke="#000" stroke-width="1.2"/><g stroke="#e06020" stroke-width="1.1"><path d="M3.5 0v7M0 3.5h7M1 1l5 5M6 1l-5 5"/></g><circle cx="3.5" cy="3.5" r="1.2" fill="#fff"/></svg>
<svg style="left:48px;top:61px" width="16" height="16" viewBox="0 0 16 16"><path d="M0.5 4.5h5l1 1.5h6v2h-12z" fill="#ffff98" stroke="#a09860" stroke-width="0.8"/><path d="M0.5 15.5l3-8h12l-3 8z" fill="#f8b040" stroke="#6a5a20" stroke-width="0.9"/><path d="M9 2.5q3-2.5 6 1" stroke="#2030d0" fill="none" stroke-width="1.3"/><path d="M16 4.5l-2.5 0.5 1.5-2.5z" fill="#2030d0"/></svg>
<svg style="left:70px;top:61px" width="16" height="16" viewBox="0 0 16 16"><rect x="0.5" y="0.5" width="15" height="15" fill="#6262d6" stroke="#b0a880"/><rect x="3" y="1" width="9" height="6" fill="#fff"/><rect x="4" y="10" width="8" height="5" fill="#555"/><rect x="5" y="11" width="5" height="3" fill="#e0e0a0"/></svg>
<svg style="left:92px;top:61px" width="16" height="16" viewBox="0 0 16 16"><path d="M1 15V8l2-7h2l2 7v7z M9 15V8l2-7h2l2 7v7z" fill="#e8f0ff" stroke="#2050c0" stroke-width="1"/><rect x="1.5" y="10" width="5" height="5" fill="#fff"/><rect x="9.5" y="10" width="5" height="5" fill="#fff"/><path d="M7 9h2" stroke="#203080" stroke-width="2"/></svg>
<svg style="left:114px;top:61px" width="16" height="16" viewBox="0 0 16 16"><path d="M0.5 0.5h8l4 4v11h-12z" fill="#fff" stroke="#000"/><circle cx="7" cy="8" r="3.5" fill="#e8f0f8" stroke="#606060" stroke-width="1.2"/><path d="M9.5 10.5l5 5" stroke="#d08020" stroke-width="2.2"/></svg>
<svg style="left:136px;top:61px" width="16" height="16" viewBox="0 0 16 16"><rect x="3.5" y="0.5" width="9" height="5" fill="#fff" stroke="#333"/><rect x="0.5" y="5.5" width="15" height="6" fill="#d8d8b0" stroke="#333"/><rect x="3.5" y="10.5" width="9" height="5" fill="#fff" stroke="#333"/><rect x="2" y="7" width="2" height="1" fill="#ff0"/></svg>
<div class="a" style="left:157px;top:61px;width:1px;height:18px;background:#8591a8"></div>
<svg style="left:164px;top:61px" width="16" height="16" viewBox="0 0 16 16"><path d="M3 1l7 9M13 1L6 10" stroke="#909090" stroke-width="1.2"/><circle cx="4" cy="12.5" r="2.3" fill="none" stroke="#808080" stroke-width="1.2"/><circle cx="12" cy="12.5" r="2.3" fill="none" stroke="#808080" stroke-width="1.2"/></svg>
<svg style="left:186px;top:61px" width="16" height="16" viewBox="0 0 16 16"><rect x="1.5" y="0.5" width="8" height="9" fill="#fff" stroke="#000" stroke-width="1.2"/><rect x="6.5" y="5.5" width="8" height="10" fill="#fff" stroke="#000" stroke-width="1.2"/></svg>
<svg style="left:208px;top:61px" width="16" height="16" viewBox="0 0 16 16"><rect x="0.5" y="1.5" width="10" height="12" fill="#d8d8d8" stroke="#444"/><rect x="3" y="0.5" width="5" height="3" fill="#aaa" stroke="#444" stroke-width="0.8"/><rect x="6.5" y="6.5" width="9" height="9" fill="#fff" stroke="#444"/></svg>
<div class="a" style="left:229px;top:61px;width:1px;height:18px;background:#8591a8"></div>
<svg style="left:236px;top:61px" width="16" height="16" viewBox="0 0 16 16"><path d="M3 6q3-5 8-3q4 3 0 8l-4 5" fill="none" stroke="#1838e8" stroke-width="2.2"/><path d="M0 3l1 6 5-3z" fill="#1838e8"/></svg>
<svg style="left:258px;top:68px" width="6" height="4"><path d="M0 0h6l-3 3.5z" fill="#3a4a66"/></svg>
<svg style="left:270px;top:61px" width="16" height="16" viewBox="0 0 16 16"><path d="M13 6q-3-5-8-3q-4 3 0 8l4 5" fill="none" stroke="#505050" stroke-width="1.4"/><path d="M16 3l-1 6-5-3z" fill="#505050"/></svg>
<svg style="left:291px;top:68px" width="6" height="4"><path d="M0 0h6l-3 3.5z" fill="#a0a0a0"/></svg>
<div class="a" style="left:301px;top:61px;width:1px;height:18px;background:#8591a8"></div>
<svg style="left:308px;top:61px" width="16" height="16" viewBox="0 0 16 16"><path d="M3 9V5q0-1 1-1t1 1v3V2q0-1 1-1t1 1v6V1.5q0-1 1-1t1 1V8V3q0-1 1-1t1 1v7l1-2q1-1 2 0l-3 6q-1 2-4 2H7q-3 0-4-3z" fill="#fff" stroke="#000" stroke-width="1"/></svg>
<svg style="left:330px;top:61px" width="16" height="16" viewBox="0 0 16 16"><path d="M1.5 0.5v13l3-3 2.5 5 2-1-2.5-5h4z" fill="#fff" stroke="#000"/></svg>
<svg style="left:352px;top:68px" width="6" height="4"><path d="M0 0h6l-3 3.5z" fill="#3a4a66"/></svg>
<div class="a" style="left:362px;top:61px;width:1px;height:18px;background:#8591a8"></div>
<svg style="left:369px;top:61px" width="16" height="16" viewBox="0 0 16 16"><rect x="0.5" y="1.5" width="15" height="13" fill="#fff" stroke="#1c2f78"/><rect x="1" y="2" width="14" height="2" fill="#3c6ad8"/><path d="M4 5v8M4 7h3M4 10h3M4 13h3M8 7h5M8 10h5M8 13h5" stroke="#a09040" stroke-width="1"/></svg>
<svg style="left:391px;top:61px" width="16" height="16" viewBox="0 0 16 16"><rect x="0.5" y="1.5" width="15" height="13" fill="#fff" stroke="#1c2f78"/><rect x="1" y="2" width="14" height="2" fill="#3c6ad8"/><rect x="3" y="5" width="5" height="3" fill="#a0c8f0" stroke="#446"/><rect x="3" y="10" width="5" height="3" fill="#a0c8f0" stroke="#446"/><path d="M11 5v9" stroke="#446"/></svg>
<svg style="left:413px;top:61px" width="16" height="16" viewBox="0 0 16 16"><rect x="0.5" y="1.5" width="15" height="13" fill="#fff" stroke="#1c2f78"/><rect x="1" y="2" width="14" height="2" fill="#3c6ad8"/><circle cx="8.5" cy="9.5" r="5" fill="#e0e0e0" stroke="#999"/><path d="M8.5 6.5v3h2" stroke="#666" fill="none"/><path d="M2 8l2-3 2 2" stroke="#20b020" stroke-width="2" fill="none"/></svg>
<svg style="left:435px;top:61px" width="16" height="16" viewBox="0 0 16 16"><rect x="0.5" y="1.5" width="15" height="13" fill="#fff" stroke="#1c2f78"/><rect x="1" y="2" width="14" height="2" fill="#3c6ad8"/><path d="M4 8q4-4 8 0q1 4-3 6" fill="none" stroke="#1040e0" stroke-width="2.2"/><path d="M2 6l2 5 3-4z" fill="#1040e0"/></svg>
<svg style="left:457px;top:61px" width="16" height="16" viewBox="0 0 16 16"><rect x="0.5" y="1.5" width="15" height="13" fill="#fff" stroke="#1c2f78"/><rect x="1" y="2" width="14" height="2" fill="#3c6ad8"/><path d="M4 9q0-4 5-3M12 9q0 4-5 3" fill="none" stroke="#e0a020" stroke-width="2"/><path d="M10 4l2 2.5-3 1z M6 14l-2-2.5 3-1z" fill="#e0a020"/></svg>
<div class="a" style="left:479px;top:61px;width:1px;height:18px;background:#8591a8"></div>
<svg style="left:485px;top:61px" width="16" height="16" viewBox="0 0 16 16"><rect x="0.5" y="0.5" width="13" height="6" fill="#fff" stroke="#1c2f78"/><rect x="1" y="1" width="12" height="1.5" fill="#3c6ad8"/><rect x="6" y="8" width="10" height="8" fill="#f0c020"/><path d="M8 10h2M12 10h2M8 13h2M12 13h2" stroke="#fff" stroke-width="1.5"/></svg>
<svg style="left:507px;top:61px" width="16" height="16" viewBox="0 0 16 16"><rect x="0.5" y="0.5" width="14" height="11" fill="#fff" stroke="#1c2f78"/><rect x="1" y="1" width="13" height="1.5" fill="#3c6ad8"/><path d="M3 5h6M3 8h6" stroke="#888"/><path d="M12 6l4 4h-2v6h-4v-6h-2z" fill="#f8c020"/></svg>
<svg style="left:529px;top:61px" width="16" height="16" viewBox="0 0 16 16"><rect x="0.5" y="0.5" width="14" height="11" fill="#fff" stroke="#1c2f78"/><rect x="1" y="1" width="13" height="1.5" fill="#3c6ad8"/><path d="M3 5h6M3 8h6" stroke="#888"/><path d="M12 16l4-4h-2v-5h-4v5h-2z" fill="#f8c020"/></svg>
<div class="a" style="left:550px;top:61px;width:1px;height:18px;background:#8591a8"></div>
<svg style="left:557px;top:61px" width="16" height="16" viewBox="0 0 16 16"><g fill="none" stroke="#000" stroke-width="1.4"><rect x="0.7" y="2.7" width="3.6" height="2.6"/><rect x="6.2" y="2.7" width="3.6" height="2.6"/><rect x="11.7" y="2.7" width="3.6" height="2.6"/><rect x="0.7" y="7.2" width="3.6" height="2.6"/><rect x="6.2" y="7.2" width="3.6" height="2.6"/><rect x="11.7" y="7.2" width="3.6" height="2.6"/><rect x="0.7" y="11.7" width="3.6" height="2.6"/><rect x="6.2" y="11.7" width="3.6" height="2.6"/><rect x="11.7" y="11.7" width="3.6" height="2.6"/></g></svg>
<svg style="left:579px;top:68px" width="6" height="4"><path d="M0 0h6l-3 3.5z" fill="#3a4a66"/></svg>
<svg style="left:590px;top:61px" width="16" height="16" viewBox="0 0 16 16"><path d="M0.5 2.5h5l1 1.5h9v11h-15z" fill="#a8c8f0" stroke="#666"/><rect x="0.5" y="5.5" width="15" height="8" fill="#000" stroke="#666"/><path d="M8 6.5l2 2-2 2-2-2z" fill="none" stroke="#f00"/></svg>
<svg style="left:612px;top:61px" width="16" height="16" viewBox="0 0 16 16"><rect x="0.5" y="1.5" width="15" height="14" fill="#fff" stroke="#1c2f78"/><rect x="1" y="2" width="14" height="1.5" fill="#3c6ad8"/><path d="M3 6l3 3-3 3M8 6l3 3-3 3" fill="none" stroke="#1c2f78" stroke-width="2"/></svg>
<svg style="left:634px;top:61px" width="16" height="16" viewBox="0 0 16 16"><rect x="2.5" y="3.5" width="13" height="12" fill="#fff" stroke="#1c2f78"/><rect x="3" y="4" width="12" height="1.5" fill="#3c6ad8"/><path d="M3 0v6M0 3h6M1 1l4 4M5 1l-4 4" stroke="#f8e040" stroke-width="1.1"/></svg>
<svg style="left:656px;top:61px" width="16" height="16" viewBox="0 0 16 16"><rect x="0.5" y="0.5" width="10" height="8" fill="#a8d0f8" stroke="#4a80d8"/><rect x="5.5" y="6.5" width="10" height="9" fill="#fff" stroke="#000"/><rect x="6.5" y="8" width="8" height="6" fill="#e8a020"/><path d="M7 14.5l2-2 2 1 2-2" stroke="#c04010" fill="none" stroke-width="0.8"/></svg>
<svg style="left:678px;top:61px" width="16" height="16" viewBox="0 0 16 16"><rect x="0.5" y="0.5" width="10" height="8" fill="#fff" stroke="#000"/><rect x="1.5" y="2" width="8" height="5" fill="#e8a020"/><path d="M2 7.5l2-2 2 1 2-2" stroke="#c04010" fill="none" stroke-width="0.8"/><rect x="5.5" y="7.5" width="10" height="8" fill="#c0c0c0" stroke="#555"/><path d="M11 1q3-1 4 2" stroke="#2040d0" fill="none"/></svg>
<svg style="left:700px;top:61px" width="16" height="16" viewBox="0 0 16 16"><rect x="0.5" y="0.5" width="10" height="8" fill="#e0e0e0" stroke="#888"/><rect x="5.5" y="6.5" width="10" height="9" fill="#fff" stroke="#000"/><rect x="6.5" y="8" width="8" height="6" fill="#e8a020"/><path d="M7 14.5l2-2 2 1 2-2" stroke="#c04010" fill="none" stroke-width="0.8"/></svg>
<svg style="left:722px;top:61px" width="16" height="16" viewBox="0 0 16 16"><rect x="0.5" y="0.5" width="10" height="8" fill="#eee" stroke="#bbb"/><rect x="5.5" y="7.5" width="10" height="8" fill="#fff" stroke="#444"/><rect x="7" y="10" width="7" height="4" fill="#ccc"/></svg>
<svg style="left:744px;top:61px" width="16" height="16" viewBox="0 0 16 16"><circle cx="9" cy="9" r="6" fill="#e8e8e8" stroke="#999"/><path d="M9 5v4h3" stroke="#888" fill="none"/><path d="M1 9q0-6 6-7" stroke="#40b040" stroke-width="2" fill="none"/><path d="M0 7l2 4 3-3z" fill="#40b040"/></svg>
<svg style="left:766px;top:68px" width="6" height="4"><path d="M0 0h6l-3 3.5z" fill="#3a4a66"/></svg>
<svg style="left:776px;top:61px" width="16" height="16" viewBox="0 0 16 16"><rect x="5.5" y="0.5" width="10" height="9" fill="#fff" stroke="#000"/><rect x="6.5" y="2" width="8" height="6" fill="#e8a020"/><path d="M7 8.5l2-2 2 1 2-2" stroke="#c04010" fill="none" stroke-width="0.8"/><path d="M0.5 12l4-3.5v2h7v3h-7v2z" fill="#a8c8f8" stroke="#2050d0"/></svg>
<svg style="left:798px;top:61px" width="16" height="16" viewBox="0 0 16 16"><rect x="0.5" y="0.5" width="10" height="9" fill="#fff" stroke="#000"/><rect x="1.5" y="2" width="8" height="6" fill="#e8a020"/><path d="M2 8.5l2-2 2 1 2-2" stroke="#c04010" fill="none" stroke-width="0.8"/><path d="M15.5 12l-4-3.5v2h-7v3h7v2z" fill="#a8c8f8" stroke="#2050d0"/></svg>
<svg style="left:822px;top:68px" width="6" height="4"><path d="M0 0h6l-3 3.5z" fill="#3a4a66"/></svg>
<div class="a" style="left:831px;top:61px;width:1px;height:18px;background:#8591a8"></div>
<svg style="left:838px;top:61px" width="16" height="16" viewBox="0 0 16 16"><rect x="0.5" y="1.5" width="15" height="13" fill="#fff" stroke="#1c2f78"/><rect x="1" y="2" width="14" height="2" fill="#3c6ad8"/><path d="M3 5.5h10M3 7.5h10M3 9.5h10M3 11.5h10M3 13.5h10" stroke="#333"/></svg>
<svg style="left:860px;top:61px" width="16" height="16" viewBox="0 0 16 16"><rect x="0.5" y="1.5" width="15" height="13" fill="#fff" stroke="#1c2f78"/><rect x="1" y="2" width="14" height="2" fill="#3c6ad8"/><circle cx="4.5" cy="7" r="1.7" fill="#f00"/><circle cx="4.5" cy="11.5" r="1.7" fill="#00f"/><path d="M8 7h5M8 11.5h5" stroke="#444"/></svg>
<svg style="left:882px;top:61px" width="16" height="16" viewBox="0 0 16 16"><rect x="0.5" y="1.5" width="15" height="13" fill="#fff" stroke="#888"/><rect x="1" y="2" width="14" height="2" fill="#aab"/><path d="M1 7h14M1 10h14M1 13h14M4.5 4v11M8 4v11M11.5 4v11" stroke="#ccc"/></svg>
<svg style="left:905px;top:68px" width="6" height="4"><path d="M0 0h6l-3 3.5z" fill="#3a4a66"/></svg>
<svg style="left:915px;top:61px" width="16" height="16" viewBox="0 0 16 16"><rect x="0.5" y="1.5" width="15" height="13" fill="#fff" stroke="#1c2f78"/><rect x="1" y="2" width="14" height="2" fill="#3c6ad8"/><path d="M3 13h10M4 13l4-7 3 7" stroke="#000" fill="none" stroke-width="1.2"/></svg>
<svg style="left:937px;top:61px" width="16" height="16" viewBox="0 0 16 16"><rect x="0.5" y="1.5" width="15" height="13" fill="#fff" stroke="#1c2f78"/><rect x="1" y="2" width="14" height="2" fill="#3c6ad8"/><path d="M2 13.5h12M4.5 13v-5M6.5 13v-7M8.5 13v-3M10.5 13v-6M12.5 13v-4" stroke="#2030e0"/></svg>
<svg style="left:959px;top:61px" width="16" height="16" viewBox="0 0 16 16"><rect x="0.5" y="1.5" width="15" height="13" fill="#fff" stroke="#1c2f78"/><rect x="1" y="2" width="14" height="2" fill="#3c6ad8"/><rect x="2" y="5" width="5" height="2" fill="#ccc"/><rect x="8" y="5" width="5" height="2" fill="#f0b040"/><rect x="2" y="8" width="5" height="2" fill="#ccc"/><rect x="8" y="8" width="5" height="2" fill="#f0b040"/><rect x="2" y="11" width="5" height="2" fill="#ccc"/><rect x="8" y="11" width="5" height="2" fill="#f0e040"/></svg>
<div class="a" style="left:980px;top:61px;width:1px;height:18px;background:#8591a8"></div>
<svg style="left:987px;top:61px" width="16" height="16" viewBox="0 0 16 16"><circle cx="8" cy="8" r="7.5" fill="#c8c8d0" stroke="#3050a0"/><path d="M4 14l5-9" stroke="#1040c0" stroke-width="1.8"/><path d="M5 6q1-4 5-3q3 2 0 5" stroke="#1040c0" stroke-width="1.6" fill="none"/><circle cx="7" cy="5" r="1.5" fill="#3080f0"/></svg>
<svg style="left:1009px;top:61px" width="16" height="16" viewBox="0 0 16 16"><rect x="1" y="5" width="12" height="9" fill="#909090"/><rect x="4" y="3" width="6" height="2" fill="#a0a0a0"/><circle cx="7" cy="9.5" r="2.5" fill="#a0c8c8"/><circle cx="7" cy="9.5" r="1.4" fill="#888"/><rect x="0" y="0" width="1" height="1" fill="#000"/></svg>
<svg style="left:1030px;top:61px" width="16" height="16" viewBox="0 0 16 16"><circle cx="3" cy="3" r="2.2" fill="#000"/><circle cx="8" cy="3" r="2.2" fill="#000"/><rect x="1" y="5" width="11" height="3" fill="#000"/><path d="M3 8l-1 4M7 8l1 4" stroke="#000" stroke-width="1.3"/><circle cx="12" cy="12" r="3" fill="#f00"/></svg>
<svg style="left:1053px;top:68px" width="6" height="4"><path d="M0 0h6l-3 3.5z" fill="#3a4a66"/></svg>
<svg style="left:1063px;top:73px" width="6" height="4"><path d="M0 0h6l-3 3.5z" fill="#404040"/></svg>
<div class="a" style="left:788px;top:970px;width:22px;height:22px;background:#fff3c8;border:1px solid #e5c365"></div>
<svg style="left:792px;top:973px" width="16" height="16" viewBox="0 0 16 16"><path d="M1.5 0.5v13l3-3 2.5 5 2-1-2.5-5h4z" fill="#fff" stroke="#000"/></svg>
<svg style="left:26px;top:973px" width="16" height="16" viewBox="0 0 16 16"><rect x="0.5" y="0.5" width="15" height="14" fill="#fff" stroke="#1c2f78"/><rect x="1" y="1" width="7" height="13" fill="#a8c8f0"/><path d="M5 7q0-3 5-2M12 8q0 3-5 3" fill="none" stroke="#c89020" stroke-width="1.8"/></svg>
<svg style="left:48px;top:973px" width="16" height="16" viewBox="0 0 16 16"><rect x="0.5" y="0.5" width="13" height="12" fill="#fff" stroke="#000"/><rect x="1" y="1" width="12" height="1.5" fill="#1c2f78"/><path d="M3 5h7M3 7h7M3 9h5" stroke="#555"/><path d="M8 11h4v-2l4 3.5-4 3.5v-2h-4z" fill="#30c0f0" stroke="#1060a0" stroke-width="0.6"/></svg>
<svg style="left:70px;top:973px" width="16" height="16" viewBox="0 0 16 16"><path d="M6 9l8-8" stroke="#000" stroke-width="2"/><path d="M10 0l1 2M14 5l2 0" stroke="#000"/><circle cx="3" cy="10" r="2.2" fill="#ff0" stroke="#000" stroke-width="0.5"/><circle cx="6" cy="12" r="2" fill="#886"/><circle cx="3" cy="14" r="2" fill="#ff0" stroke="#000" stroke-width="0.5"/></svg>
<svg style="left:92px;top:973px" width="16" height="16" viewBox="0 0 16 16"><rect x="4.5" y="0.5" width="11" height="11" fill="#fff" stroke="#000"/><path d="M1 15l7-7" stroke="#802020" stroke-width="2"/><path d="M5 5l4-3 4 4-3 3z" fill="#f0c020" stroke="#000" stroke-width="0.6"/></svg>
<svg style="left:114px;top:979px" width="6" height="4"><path d="M0 0h6l-3 3.5z" fill="#3a4a66"/></svg>
<div class="a" style="left:124px;top:972px;width:1px;height:18px;background:#8591a8"></div>
<svg style="left:131px;top:973px" width="16" height="16" viewBox="0 0 16 16"><path d="M1 1l14 14M15 1L1 15" stroke="#000" stroke-width="2.6"/><circle cx="8" cy="8" r="4.2" fill="#ff0" stroke="#f0f" stroke-width="2"/></svg>
<div class="a" style="left:152px;top:972px;width:1px;height:18px;background:#8591a8"></div>
<svg style="left:160px;top:973px" width="16" height="16" viewBox="0 0 16 16"><path d="M1 8l6-6 8 8-4 4H6z" fill="#e0e0e0" stroke="#000" stroke-width="1.4"/><path d="M3.5 10.5l5-5 4 4-3 3z" fill="#ff0"/></svg>
<svg style="left:181px;top:973px" width="16" height="16" viewBox="0 0 16 16"><circle cx="11" cy="4" r="3.8" fill="#ff0" stroke="#000" stroke-width="0.7"/><circle cx="5" cy="12" r="3.8" fill="#ff0" stroke="#000" stroke-width="0.7"/><circle cx="11" cy="12" r="3.8" fill="#ff0" stroke="#000" stroke-width="0.7"/><path d="M1 3h5M3.5 0.5v5" stroke="#000" stroke-width="1.6"/></svg>
<svg style="left:203px;top:973px" width="16" height="16" viewBox="0 0 16 16"><path d="M0 8h7M3.5 4.5v7" stroke="#000" stroke-width="2"/><circle cx="11.5" cy="8" r="4" fill="#ff0" stroke="#000" stroke-width="0.7"/></svg>
<svg style="left:225px;top:973px" width="16" height="16" viewBox="0 0 16 16"><text x="6" y="9" font-size="12" font-weight="bold" font-family="Liberation Sans">?</text><circle cx="3" cy="13" r="2.5" fill="#fff" stroke="#000"/><circle cx="13" cy="13" r="2.5" fill="#fff" stroke="#000"/></svg>
<svg style="left:247px;top:973px" width="16" height="16" viewBox="0 0 16 16"><rect x="2.5" y="2.5" width="11" height="11" fill="none" stroke="#1030f0"/><path d="M3 3l10 10M13 3L3 13" stroke="#1030f0"/><circle cx="2.5" cy="2.5" r="2" fill="#fff" stroke="#000"/><circle cx="13.5" cy="2.5" r="2" fill="#fff" stroke="#000"/><circle cx="2.5" cy="13.5" r="2" fill="#fff" stroke="#000"/><circle cx="13.5" cy="13.5" r="2" fill="#fff" stroke="#000"/></svg>
<svg style="left:270px;top:973px" width="16" height="16" viewBox="0 0 16 16"><circle cx="3.5" cy="13" r="2.7" fill="#fff" stroke="#000"/><circle cx="12.5" cy="13" r="2.7" fill="#fff" stroke="#000"/><path d="M6 0.5h4v5h3l-5 5-5-5h3z" fill="#fff" stroke="#000"/></svg>
<svg style="left:291px;top:973px" width="16" height="16" viewBox="0 0 16 16"><circle cx="8" cy="8" r="7" fill="#fff" stroke="#000" stroke-dasharray="1.2 1.3"/><circle cx="8" cy="8" r="4.6" fill="#806f00" stroke="#000"/></svg>
<svg style="left:313px;top:979px" width="6" height="4"><path d="M0 0h6l-3 3.5z" fill="#3a4a66"/></svg>
<div class="a" style="left:323px;top:972px;width:1px;height:18px;background:#8591a8"></div>
<svg style="left:330px;top:973px" width="16" height="16" viewBox="0 0 16 16"><path d="M4 2h8l3.5 6-3.5 6H4L0.5 8z" fill="none" stroke="#1020f0" stroke-width="1.8"/></svg>
<svg style="left:352px;top:973px" width="16" height="16" viewBox="0 0 16 16"><path d="M4 2h8l3.5 6-3.5 6H4L0.5 8z" fill="none" stroke="#ff0" stroke-width="1.8"/><path d="M4 2L0.5 8 4 14h5" fill="none" stroke="#1020f0" stroke-width="1.8"/></svg>
<svg style="left:374px;top:973px" width="16" height="16" viewBox="0 0 16 16"><rect x="2.5" y="3.5" width="10" height="10" fill="none" stroke="#888" stroke-width="1.3"/><path d="M4 4h7l3 4-3 4H4L1 8z" fill="none" stroke="#1030e0" stroke-width="1.3"/></svg>
<svg style="left:396px;top:973px" width="16" height="16" viewBox="0 0 16 16"><path d="M1 1l6 6M7 1L1 7M9 1l6 6M15 1l-6 6M1 9l6 6M7 9l-6 6M9 9l6 6M15 9l-6 6" stroke="#000" stroke-width="1.5"/><path d="M0 1h3M5 1h3M8 1h3M13 1h3M0 15h3M5 15h3M8 15h3M13 15h3" stroke="#1020f0" stroke-width="1.6"/></svg>
<svg style="left:418px;top:973px" width="16" height="16" viewBox="0 0 16 16"><path d="M1 1l6 6M7 1L1 7M9 1l6 6M15 1l-6 6M1 9l6 6M7 9l-6 6M9 9l6 6M15 9l-6 6" stroke="#000" stroke-width="1.5"/><path d="M0 1h3M5 1h3M8 1h3M13 1h3M0 15h3M5 15h3M8 15h3M13 15h3" stroke="#e01010" stroke-width="1.6"/></svg>
<div class="a" style="left:439px;top:972px;width:1px;height:18px;background:#8591a8"></div>
<svg style="left:445px;top:973px" width="16" height="16" viewBox="0 0 16 16"><path d="M4 12l8-8" stroke="#1030d0" stroke-width="1.5"/><circle cx="12" cy="4" r="3.5" fill="#ff0" stroke="#000" stroke-width="0.6"/><circle cx="4" cy="12" r="3.5" fill="#a8d0f0" stroke="#000" stroke-width="0.6"/></svg>
<svg style="left:467px;top:973px" width="16" height="16" viewBox="0 0 16 16"><path d="M5 5h6l2 3-2 3H5L3 8z" fill="none" stroke="#000" stroke-width="1.3"/><path d="M1 1l3 3M15 1l-3 3M1 15l3-3M15 15l-3-3" stroke="#1030e0" stroke-width="1.3"/><rect x="0" y="0" width="3" height="2" fill="#ff0"/><rect x="13" y="0" width="3" height="2" fill="#ff0"/><rect x="0" y="14" width="3" height="2" fill="#ff0"/><rect x="13" y="14" width="3" height="2" fill="#ff0"/></svg>
<svg style="left:490px;top:973px" width="16" height="16" viewBox="0 0 16 16"><path d="M7 1h6l2 3-2 3H7L5 4z" fill="none" stroke="#ee0" stroke-width="1.2"/><path d="M3 9h6l2 3-2 3H3L1 12z" fill="none" stroke="#000" stroke-width="1.3"/></svg>
<svg style="left:512px;top:973px" width="16" height="16" viewBox="0 0 16 16"><path d="M7 1h6l2 3-2 3H7L5 4z" fill="none" stroke="#777" stroke-width="1.2"/><path d="M3 9h6l2 3-2 3H3L1 12z" fill="none" stroke="#000" stroke-width="1.3"/></svg>
<div class="a" style="left:533px;top:972px;width:1px;height:18px;background:#8591a8"></div>
<svg style="left:540px;top:973px" width="16" height="16" viewBox="0 0 16 16"><rect x="0.5" y="0.5" width="15" height="15" fill="none" stroke="#1030e0" stroke-width="1.2"/><rect x="3.5" y="3.5" width="9" height="9" fill="none" stroke="#000" stroke-width="1.3"/><path d="M1 1l3 3M15 1l-3 3M1 15l3-3M15 15l-3-3" stroke="#1030e0"/></svg>
<svg style="left:562px;top:973px" width="16" height="16" viewBox="0 0 16 16"><path d="M8 0.5L15 8 8 15.5 1 8z" fill="none" stroke="#000" stroke-width="1.4"/><path d="M1 8h14M8 0.5v15" stroke="#000"/></svg>
<svg style="left:584px;top:973px" width="16" height="16" viewBox="0 0 16 16"><circle cx="3" cy="5" r="1.8" fill="#ff0" stroke="#000" stroke-width="0.5"/><circle cx="8" cy="4" r="1.8" fill="#ff0" stroke="#000" stroke-width="0.5"/><circle cx="12" cy="6" r="1.8" fill="#ff0" stroke="#000" stroke-width="0.5"/><circle cx="5" cy="10" r="1.8" fill="#ff0" stroke="#000" stroke-width="0.5"/><circle cx="11" cy="11" r="1.8" fill="#ff0" stroke="#000" stroke-width="0.5"/><path d="M1 12L15 4M1 5l14 9" stroke="#f00" stroke-width="2"/></svg>
<svg style="left:606px;top:979px" width="6" height="4"><path d="M0 0h6l-3 3.5z" fill="#3a4a66"/></svg>
<svg style="left:616px;top:973px" width="16" height="16" viewBox="0 0 16 16"><circle cx="4" cy="12" r="3" fill="#fff" stroke="#000"/><text x="6" y="8" font-size="8.5" font-weight="bold" font-family="Liberation Sans">Fe</text></svg>
<div class="a" style="left:638px;top:972px;width:1px;height:18px;background:#8591a8"></div>
<svg style="left:645px;top:973px" width="16" height="16" viewBox="0 0 16 16"><rect x="0.5" y="0.5" width="15" height="15" fill="none" stroke="#1030e0" stroke-width="1.2"/><path d="M8 2v12M2 8h12" stroke="#000" stroke-width="1.5"/><path d="M8 1l2.5 3h-5zM8 15l2.5-3h-5zM1 8l3 2.5v-5zM15 8l-3 2.5v-5z" fill="#000"/><circle cx="8" cy="8" r="2" fill="#ff0"/></svg>
<svg style="left:667px;top:979px" width="6" height="4"><path d="M0 0h6l-3 3.5z" fill="#3a4a66"/></svg>
<div class="a" style="left:677px;top:972px;width:1px;height:18px;background:#8591a8"></div>
<svg style="left:684px;top:973px" width="16" height="16" viewBox="0 0 16 16"><text x="0" y="14" font-size="15" font-weight="bold" font-style="italic" font-family="Liberation Serif" fill="#1020a0">M</text></svg>
<svg style="left:706px;top:973px" width="16" height="16" viewBox="0 0 16 16"><rect x="0.5" y="0.5" width="14" height="14" fill="none" stroke="#1030a0" stroke-width="1.2"/><circle cx="6" cy="6" r="3.8" fill="none" stroke="#f00"/><circle cx="9" cy="9" r="4" fill="#109090"/></svg>
<div class="a" style="left:727px;top:972px;width:1px;height:18px;background:#8591a8"></div>
<svg style="left:734px;top:973px" width="16" height="16" viewBox="0 0 16 16"><path d="M4 1v15M12 1v15M0 4h16M0 12h16" stroke="#777" stroke-width="1.2"/></svg>
<svg style="left:813px;top:973px" width="16" height="16" viewBox="0 0 16 16"><path d="M8 1v14M1 8h14" stroke="#000" stroke-width="2"/><path d="M8 0l3 3H5zM8 16l3-3H5zM0 8l3 3V5zM16 8l-3 3V5z" fill="#000"/><circle cx="8" cy="8" r="2.5" fill="#fff" stroke="#000" stroke-width="1.5"/></svg>
<svg style="left:835px;top:973px" width="16" height="16" viewBox="0 0 16 16"><path d="M13 8a5 5 0 1 1-3-4.6" fill="none" stroke="#000" stroke-width="2.2"/><path d="M8 0l5 3.5-5 3z" fill="#000"/></svg>
<svg style="left:857px;top:973px" width="16" height="16" viewBox="0 0 16 16"><path d="M8 2v12M2 8h12" stroke="#000" stroke-width="2.2"/><path d="M8 0l3.5 3.5h-7zM8 16l3.5-3.5h-7zM0 8l3.5 3.5v-7zM16 8l-3.5 3.5v-7z" fill="#000"/></svg>
<svg style="left:879px;top:973px" width="16" height="16" viewBox="0 0 16 16"><path d="M1 5V1h4M11 1h4v4M15 11v4h-4M5 15H1v-4M1 1l4 4M15 1l-4 4M1 15l4-4M15 15l-4-4" stroke="#000" stroke-width="1.4" fill="none"/><rect x="5.5" y="5.5" width="5" height="5" fill="none" stroke="#000" stroke-width="1.5"/></svg>
<svg style="left:900px;top:973px" width="16" height="16" viewBox="0 0 16 16"><path d="M15 2L1 8l14 6M11 4v8" stroke="#000" stroke-width="1.8" fill="none"/></svg>
<svg style="left:923px;top:973px" width="16" height="16" viewBox="0 0 16 16"><path d="M1 15h14M3 15l5-11 5 11M3 8h10M8 1v3" stroke="#000" stroke-width="1.5" fill="none"/></svg>
<svg style="left:944px;top:973px" width="16" height="16" viewBox="0 0 16 16"><circle cx="8" cy="9" r="5" fill="none" stroke="#000" stroke-width="1.6" stroke-dasharray="2 2"/><circle cx="8" cy="9" r="2.5" fill="#000"/></svg>
<svg style="left:966px;top:973px" width="16" height="16" viewBox="0 0 16 16"><rect x="1" y="1" width="6" height="6" fill="none" stroke="#000" stroke-width="1.5" stroke-dasharray="2 1.5"/><rect x="10" y="7" width="2" height="8" fill="#ccc"/><rect x="13" y="7" width="2" height="8" fill="#ccc"/></svg>
<svg style="left:988px;top:973px" width="16" height="16" viewBox="0 0 16 16"><rect x="1" y="1" width="6" height="6" fill="none" stroke="#000" stroke-width="1.5" stroke-dasharray="2 1.5"/><rect x="8" y="8" width="8" height="8" fill="#888"/></svg>
<svg style="left:1047px;top:973px" width="16" height="16" viewBox="0 0 16 16"><path d="M1 1v14h14M4 6v9M7 8v7M10 8v7M13 8v7" stroke="#000" stroke-width="1.4" fill="none"/></svg>
<svg style="left:1069px;top:973px" width="16" height="16" viewBox="0 0 16 16"><path d="M1 15h14M2 15L8 1M8 1q6 6 6 14" stroke="#000" stroke-width="1.3" fill="none"/></svg>
<svg style="left:1091px;top:973px" width="16" height="16" viewBox="0 0 16 16"><circle cx="5" cy="12" r="3.5" fill="#fff" stroke="#000" stroke-width="1.3"/><path d="M7 9l8-7M5 8V1h3" stroke="#000" stroke-width="2" fill="none"/></svg>
<svg style="left:1112px;top:973px" width="16" height="16" viewBox="0 0 16 16"><path d="M1 6l9-4 5 3-9 5-5 5z" fill="#fff" stroke="#000" stroke-width="1.3"/><path d="M1 15l14-8" stroke="#000" stroke-width="1.2"/></svg>
<svg style="left:756px;top:985px" width="6" height="4"><path d="M0 0h6l-3 3.5z" fill="#404040"/></svg>
<svg style="left:1009px;top:985px" width="6" height="4"><path d="M0 0h6l-3 3.5z" fill="#404040"/></svg>
<svg style="left:1134px;top:985px" width="6" height="4"><path d="M0 0h6l-3 3.5z" fill="#404040"/></svg>
<svg style="left:1174px;top:997px" width="16" height="16" viewBox="0 0 16 16"><path d="M6 9l8-8" stroke="#000" stroke-width="2"/><path d="M10 0l1 2M14 5l2 0" stroke="#000"/><circle cx="3" cy="10" r="2.2" fill="#ff0" stroke="#000" stroke-width="0.5"/><circle cx="6" cy="12" r="2" fill="#886"/><circle cx="3" cy="14" r="2" fill="#ff0" stroke="#000" stroke-width="0.5"/></svg>
<svg style="left:1303px;top:997px" width="15" height="15" viewBox="0 0 15 15"><rect x="0.5" y="0.5" width="14" height="14" fill="none" stroke="#30b030"/><path d="M7.5 2v11M2 7.5h11" stroke="#10c010" stroke-width="2"/><path d="M7.5 1l3 3h-6zM7.5 14l3-3h-6zM1 7.5l3 3v-6zM14 7.5l-3 3v-6z" fill="#10d010"/><circle cx="7.5" cy="7.5" r="1.5" fill="#ccc"/></svg>
<svg style="left:1419px;top:999px" width="13" height="12" viewBox="0 0 13 12"><rect x="0" y="3" width="13" height="9" fill="#8c9aac"/><rect x="3" y="1" width="6" height="2" fill="#8c9aac"/><circle cx="6.5" cy="7.5" r="2.5" fill="#c0ccd8"/><circle cx="6.5" cy="7.5" r="1.3" fill="#8c9aac"/></svg>
<svg style="left:1804px;top:1003px" width="9" height="9"><g fill="#8aa8c8"><rect x="6" y="0" width="2" height="2"/><rect x="3" y="3" width="2" height="2"/><rect x="6" y="3" width="2" height="2"/><rect x="0" y="6" width="2" height="2"/><rect x="3" y="6" width="2" height="2"/><rect x="6" y="6" width="2" height="2"/></g></svg></body></html>
